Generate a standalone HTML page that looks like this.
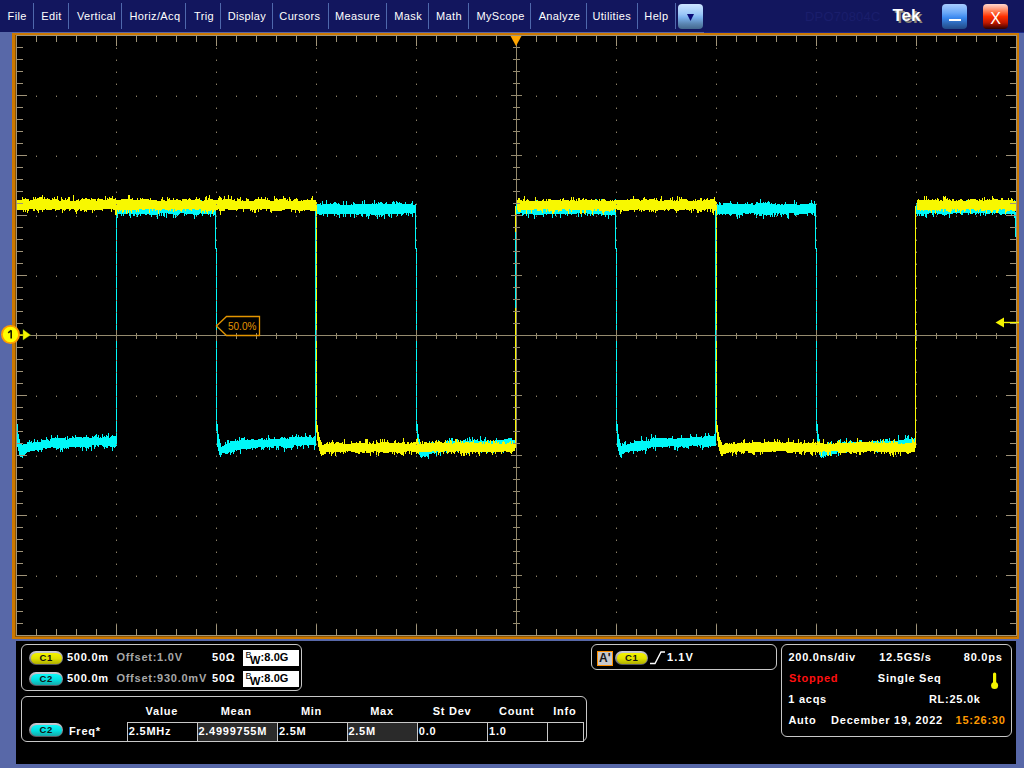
<!DOCTYPE html>
<html><head><meta charset="utf-8"><title>Scope</title>
<style>
html,body{margin:0;padding:0;width:1024px;height:768px;overflow:hidden;background:#5868a8;font-family:"Liberation Sans",sans-serif}
</style></head><body>
<div style="position:absolute;left:0;top:0;width:1024px;height:32px;background:#12165e"></div><div style="position:absolute;left:704px;top:32px;width:320px;height:1px;background:#1c2a8a"></div><div style="position:absolute;left:33px;top:3px;width:1px;height:26px;background:#4f68ac"></div><div style="position:absolute;left:68px;top:3px;width:1px;height:26px;background:#4f68ac"></div><div style="position:absolute;left:121px;top:3px;width:1px;height:26px;background:#4f68ac"></div><div style="position:absolute;left:185px;top:3px;width:1px;height:26px;background:#4f68ac"></div><div style="position:absolute;left:220px;top:3px;width:1px;height:26px;background:#4f68ac"></div><div style="position:absolute;left:272px;top:3px;width:1px;height:26px;background:#4f68ac"></div><div style="position:absolute;left:328px;top:3px;width:1px;height:26px;background:#4f68ac"></div><div style="position:absolute;left:386px;top:3px;width:1px;height:26px;background:#4f68ac"></div><div style="position:absolute;left:428px;top:3px;width:1px;height:26px;background:#4f68ac"></div><div style="position:absolute;left:468px;top:3px;width:1px;height:26px;background:#4f68ac"></div><div style="position:absolute;left:530px;top:3px;width:1px;height:26px;background:#4f68ac"></div><div style="position:absolute;left:586px;top:3px;width:1px;height:26px;background:#4f68ac"></div><div style="position:absolute;left:637px;top:3px;width:1px;height:26px;background:#4f68ac"></div><div style="position:absolute;left:675px;top:3px;width:1px;height:26px;background:#4f68ac"></div><svg width="1024" height="32" style="position:absolute;left:0;top:0"><text x="7.57" y="20" font-size="11" letter-spacing="0.35" fill="#ffffff" font-family="Liberation Sans">File</text><text x="41.36" y="20" font-size="11" letter-spacing="0.35" fill="#ffffff" font-family="Liberation Sans">Edit</text><text x="76.95" y="20" font-size="11" letter-spacing="0.35" fill="#ffffff" font-family="Liberation Sans">Vertical</text><text x="129.54000000000002" y="20" font-size="11" letter-spacing="0.35" fill="#ffffff" font-family="Liberation Sans">Horiz/Acq</text><text x="194.06" y="20" font-size="11" letter-spacing="0.35" fill="#ffffff" font-family="Liberation Sans">Trig</text><text x="227.68" y="20" font-size="11" letter-spacing="0.35" fill="#ffffff" font-family="Liberation Sans">Display</text><text x="279.36" y="20" font-size="11" letter-spacing="0.35" fill="#ffffff" font-family="Liberation Sans">Cursors</text><text x="334.96000000000004" y="20" font-size="11" letter-spacing="0.35" fill="#ffffff" font-family="Liberation Sans">Measure</text><text x="394.36" y="20" font-size="11" letter-spacing="0.35" fill="#ffffff" font-family="Liberation Sans">Mask</text><text x="436.06" y="20" font-size="11" letter-spacing="0.35" fill="#ffffff" font-family="Liberation Sans">Math</text><text x="476.45" y="20" font-size="11" letter-spacing="0.35" fill="#ffffff" font-family="Liberation Sans">MyScope</text><text x="538.6999999999999" y="20" font-size="11" letter-spacing="0.35" fill="#ffffff" font-family="Liberation Sans">Analyze</text><text x="592.4" y="20" font-size="11" letter-spacing="0.35" fill="#ffffff" font-family="Liberation Sans">Utilities</text><text x="644.3599999999999" y="20" font-size="11" letter-spacing="0.35" fill="#ffffff" font-family="Liberation Sans">Help</text><text x="805" y="21" font-size="13" letter-spacing="0.2" fill="#1a1e6c" font-family="Liberation Sans">DPO70804C</text><text x="894.5" y="22.5" font-size="17" font-weight="bold" fill="#8c8878" font-family="Liberation Sans">Tek</text><text x="892.5" y="21" font-size="17" font-weight="bold" fill="#ffffff" font-family="Liberation Sans">Tek</text></svg><div style="position:absolute;left:678px;top:4px;width:25px;height:25px;border-radius:4px;background:linear-gradient(#cce4ff 0%,#9cc8f8 40%,#7ab0ec 55%,#5a84b0 80%,#44688e 100%)"></div><svg width="1024" height="32" style="position:absolute;left:0;top:0"><path d="M687 14H694L690.5 21Z" fill="#0a0a78"/></svg><div style="position:absolute;left:942px;top:4px;width:25px;height:25px;border-radius:4px;background:linear-gradient(#a8ccff 0%,#6aa8f8 35%,#3a88f0 55%,#2c64b0 80%,#224a88 100%)"></div><div style="position:absolute;left:949px;top:19px;width:12px;height:2px;background:#ffffff"></div><div style="position:absolute;left:983px;top:4px;width:25px;height:25px;border-radius:4px;background:linear-gradient(#ffd8d0 0%,#ff7a50 30%,#ff3000 50%,#c01800 75%,#300000 100%)"></div><svg width="1024" height="32" style="position:absolute;left:0;top:0"><text x="995.5" y="23.5" font-size="16" text-anchor="middle" fill="#ffffff" font-family="Liberation Sans">X</text></svg>
<div style="position:absolute;left:12px;top:33px;width:1007px;height:606px;background:#cc7800"></div><div style="position:absolute;left:15px;top:35px;width:1002px;height:602px;background:#8c5400"></div><div style="position:absolute;left:16px;top:35px;width:1001px;height:601px;background:#000"></div>
<svg width="1024" height="768" style="position:absolute;left:0;top:0"><g shape-rendering="crispEdges"><rect x="516" y="35" width="1" height="601" fill="#948a6e"/><path d="M36 95h1v1h-1zM36 155h1v1h-1zM36 215h1v1h-1zM36 275h1v1h-1zM36 395h1v1h-1zM36 455h1v1h-1zM36 515h1v1h-1zM36 575h1v1h-1zM56 95h1v1h-1zM56 155h1v1h-1zM56 215h1v1h-1zM56 275h1v1h-1zM56 395h1v1h-1zM56 455h1v1h-1zM56 515h1v1h-1zM56 575h1v1h-1zM76 95h1v1h-1zM76 155h1v1h-1zM76 215h1v1h-1zM76 275h1v1h-1zM76 395h1v1h-1zM76 455h1v1h-1zM76 515h1v1h-1zM76 575h1v1h-1zM96 95h1v1h-1zM96 155h1v1h-1zM96 215h1v1h-1zM96 275h1v1h-1zM96 395h1v1h-1zM96 455h1v1h-1zM96 515h1v1h-1zM96 575h1v1h-1zM116 47h1v1h-1zM116 59h1v1h-1zM116 71h1v1h-1zM116 83h1v1h-1zM116 95h1v1h-1zM116 107h1v1h-1zM116 119h1v1h-1zM116 131h1v1h-1zM116 143h1v1h-1zM116 155h1v1h-1zM116 167h1v1h-1zM116 179h1v1h-1zM116 191h1v1h-1zM116 203h1v1h-1zM116 215h1v1h-1zM116 227h1v1h-1zM116 239h1v1h-1zM116 251h1v1h-1zM116 263h1v1h-1zM116 275h1v1h-1zM116 287h1v1h-1zM116 299h1v1h-1zM116 311h1v1h-1zM116 323h1v1h-1zM116 347h1v1h-1zM116 359h1v1h-1zM116 371h1v1h-1zM116 383h1v1h-1zM116 395h1v1h-1zM116 407h1v1h-1zM116 419h1v1h-1zM116 431h1v1h-1zM116 443h1v1h-1zM116 455h1v1h-1zM116 467h1v1h-1zM116 479h1v1h-1zM116 491h1v1h-1zM116 503h1v1h-1zM116 515h1v1h-1zM116 527h1v1h-1zM116 539h1v1h-1zM116 551h1v1h-1zM116 563h1v1h-1zM116 575h1v1h-1zM116 587h1v1h-1zM116 599h1v1h-1zM116 611h1v1h-1zM116 623h1v1h-1zM136 95h1v1h-1zM136 155h1v1h-1zM136 215h1v1h-1zM136 275h1v1h-1zM136 395h1v1h-1zM136 455h1v1h-1zM136 515h1v1h-1zM136 575h1v1h-1zM156 95h1v1h-1zM156 155h1v1h-1zM156 215h1v1h-1zM156 275h1v1h-1zM156 395h1v1h-1zM156 455h1v1h-1zM156 515h1v1h-1zM156 575h1v1h-1zM176 95h1v1h-1zM176 155h1v1h-1zM176 215h1v1h-1zM176 275h1v1h-1zM176 395h1v1h-1zM176 455h1v1h-1zM176 515h1v1h-1zM176 575h1v1h-1zM196 95h1v1h-1zM196 155h1v1h-1zM196 215h1v1h-1zM196 275h1v1h-1zM196 395h1v1h-1zM196 455h1v1h-1zM196 515h1v1h-1zM196 575h1v1h-1zM216 47h1v1h-1zM216 59h1v1h-1zM216 71h1v1h-1zM216 83h1v1h-1zM216 95h1v1h-1zM216 107h1v1h-1zM216 119h1v1h-1zM216 131h1v1h-1zM216 143h1v1h-1zM216 155h1v1h-1zM216 167h1v1h-1zM216 179h1v1h-1zM216 191h1v1h-1zM216 203h1v1h-1zM216 215h1v1h-1zM216 227h1v1h-1zM216 239h1v1h-1zM216 251h1v1h-1zM216 263h1v1h-1zM216 275h1v1h-1zM216 287h1v1h-1zM216 299h1v1h-1zM216 311h1v1h-1zM216 323h1v1h-1zM216 347h1v1h-1zM216 359h1v1h-1zM216 371h1v1h-1zM216 383h1v1h-1zM216 395h1v1h-1zM216 407h1v1h-1zM216 419h1v1h-1zM216 431h1v1h-1zM216 443h1v1h-1zM216 455h1v1h-1zM216 467h1v1h-1zM216 479h1v1h-1zM216 491h1v1h-1zM216 503h1v1h-1zM216 515h1v1h-1zM216 527h1v1h-1zM216 539h1v1h-1zM216 551h1v1h-1zM216 563h1v1h-1zM216 575h1v1h-1zM216 587h1v1h-1zM216 599h1v1h-1zM216 611h1v1h-1zM216 623h1v1h-1zM236 95h1v1h-1zM236 155h1v1h-1zM236 215h1v1h-1zM236 275h1v1h-1zM236 395h1v1h-1zM236 455h1v1h-1zM236 515h1v1h-1zM236 575h1v1h-1zM256 95h1v1h-1zM256 155h1v1h-1zM256 215h1v1h-1zM256 275h1v1h-1zM256 395h1v1h-1zM256 455h1v1h-1zM256 515h1v1h-1zM256 575h1v1h-1zM276 95h1v1h-1zM276 155h1v1h-1zM276 215h1v1h-1zM276 275h1v1h-1zM276 395h1v1h-1zM276 455h1v1h-1zM276 515h1v1h-1zM276 575h1v1h-1zM296 95h1v1h-1zM296 155h1v1h-1zM296 215h1v1h-1zM296 275h1v1h-1zM296 395h1v1h-1zM296 455h1v1h-1zM296 515h1v1h-1zM296 575h1v1h-1zM316 47h1v1h-1zM316 59h1v1h-1zM316 71h1v1h-1zM316 83h1v1h-1zM316 95h1v1h-1zM316 107h1v1h-1zM316 119h1v1h-1zM316 131h1v1h-1zM316 143h1v1h-1zM316 155h1v1h-1zM316 167h1v1h-1zM316 179h1v1h-1zM316 191h1v1h-1zM316 203h1v1h-1zM316 215h1v1h-1zM316 227h1v1h-1zM316 239h1v1h-1zM316 251h1v1h-1zM316 263h1v1h-1zM316 275h1v1h-1zM316 287h1v1h-1zM316 299h1v1h-1zM316 311h1v1h-1zM316 323h1v1h-1zM316 347h1v1h-1zM316 359h1v1h-1zM316 371h1v1h-1zM316 383h1v1h-1zM316 395h1v1h-1zM316 407h1v1h-1zM316 419h1v1h-1zM316 431h1v1h-1zM316 443h1v1h-1zM316 455h1v1h-1zM316 467h1v1h-1zM316 479h1v1h-1zM316 491h1v1h-1zM316 503h1v1h-1zM316 515h1v1h-1zM316 527h1v1h-1zM316 539h1v1h-1zM316 551h1v1h-1zM316 563h1v1h-1zM316 575h1v1h-1zM316 587h1v1h-1zM316 599h1v1h-1zM316 611h1v1h-1zM316 623h1v1h-1zM336 95h1v1h-1zM336 155h1v1h-1zM336 215h1v1h-1zM336 275h1v1h-1zM336 395h1v1h-1zM336 455h1v1h-1zM336 515h1v1h-1zM336 575h1v1h-1zM356 95h1v1h-1zM356 155h1v1h-1zM356 215h1v1h-1zM356 275h1v1h-1zM356 395h1v1h-1zM356 455h1v1h-1zM356 515h1v1h-1zM356 575h1v1h-1zM376 95h1v1h-1zM376 155h1v1h-1zM376 215h1v1h-1zM376 275h1v1h-1zM376 395h1v1h-1zM376 455h1v1h-1zM376 515h1v1h-1zM376 575h1v1h-1zM396 95h1v1h-1zM396 155h1v1h-1zM396 215h1v1h-1zM396 275h1v1h-1zM396 395h1v1h-1zM396 455h1v1h-1zM396 515h1v1h-1zM396 575h1v1h-1zM416 47h1v1h-1zM416 59h1v1h-1zM416 71h1v1h-1zM416 83h1v1h-1zM416 95h1v1h-1zM416 107h1v1h-1zM416 119h1v1h-1zM416 131h1v1h-1zM416 143h1v1h-1zM416 155h1v1h-1zM416 167h1v1h-1zM416 179h1v1h-1zM416 191h1v1h-1zM416 203h1v1h-1zM416 215h1v1h-1zM416 227h1v1h-1zM416 239h1v1h-1zM416 251h1v1h-1zM416 263h1v1h-1zM416 275h1v1h-1zM416 287h1v1h-1zM416 299h1v1h-1zM416 311h1v1h-1zM416 323h1v1h-1zM416 347h1v1h-1zM416 359h1v1h-1zM416 371h1v1h-1zM416 383h1v1h-1zM416 395h1v1h-1zM416 407h1v1h-1zM416 419h1v1h-1zM416 431h1v1h-1zM416 443h1v1h-1zM416 455h1v1h-1zM416 467h1v1h-1zM416 479h1v1h-1zM416 491h1v1h-1zM416 503h1v1h-1zM416 515h1v1h-1zM416 527h1v1h-1zM416 539h1v1h-1zM416 551h1v1h-1zM416 563h1v1h-1zM416 575h1v1h-1zM416 587h1v1h-1zM416 599h1v1h-1zM416 611h1v1h-1zM416 623h1v1h-1zM436 95h1v1h-1zM436 155h1v1h-1zM436 215h1v1h-1zM436 275h1v1h-1zM436 395h1v1h-1zM436 455h1v1h-1zM436 515h1v1h-1zM436 575h1v1h-1zM456 95h1v1h-1zM456 155h1v1h-1zM456 215h1v1h-1zM456 275h1v1h-1zM456 395h1v1h-1zM456 455h1v1h-1zM456 515h1v1h-1zM456 575h1v1h-1zM476 95h1v1h-1zM476 155h1v1h-1zM476 215h1v1h-1zM476 275h1v1h-1zM476 395h1v1h-1zM476 455h1v1h-1zM476 515h1v1h-1zM476 575h1v1h-1zM496 95h1v1h-1zM496 155h1v1h-1zM496 215h1v1h-1zM496 275h1v1h-1zM496 395h1v1h-1zM496 455h1v1h-1zM496 515h1v1h-1zM496 575h1v1h-1zM536 95h1v1h-1zM536 155h1v1h-1zM536 215h1v1h-1zM536 275h1v1h-1zM536 395h1v1h-1zM536 455h1v1h-1zM536 515h1v1h-1zM536 575h1v1h-1zM556 95h1v1h-1zM556 155h1v1h-1zM556 215h1v1h-1zM556 275h1v1h-1zM556 395h1v1h-1zM556 455h1v1h-1zM556 515h1v1h-1zM556 575h1v1h-1zM576 95h1v1h-1zM576 155h1v1h-1zM576 215h1v1h-1zM576 275h1v1h-1zM576 395h1v1h-1zM576 455h1v1h-1zM576 515h1v1h-1zM576 575h1v1h-1zM596 95h1v1h-1zM596 155h1v1h-1zM596 215h1v1h-1zM596 275h1v1h-1zM596 395h1v1h-1zM596 455h1v1h-1zM596 515h1v1h-1zM596 575h1v1h-1zM616 47h1v1h-1zM616 59h1v1h-1zM616 71h1v1h-1zM616 83h1v1h-1zM616 95h1v1h-1zM616 107h1v1h-1zM616 119h1v1h-1zM616 131h1v1h-1zM616 143h1v1h-1zM616 155h1v1h-1zM616 167h1v1h-1zM616 179h1v1h-1zM616 191h1v1h-1zM616 203h1v1h-1zM616 215h1v1h-1zM616 227h1v1h-1zM616 239h1v1h-1zM616 251h1v1h-1zM616 263h1v1h-1zM616 275h1v1h-1zM616 287h1v1h-1zM616 299h1v1h-1zM616 311h1v1h-1zM616 323h1v1h-1zM616 347h1v1h-1zM616 359h1v1h-1zM616 371h1v1h-1zM616 383h1v1h-1zM616 395h1v1h-1zM616 407h1v1h-1zM616 419h1v1h-1zM616 431h1v1h-1zM616 443h1v1h-1zM616 455h1v1h-1zM616 467h1v1h-1zM616 479h1v1h-1zM616 491h1v1h-1zM616 503h1v1h-1zM616 515h1v1h-1zM616 527h1v1h-1zM616 539h1v1h-1zM616 551h1v1h-1zM616 563h1v1h-1zM616 575h1v1h-1zM616 587h1v1h-1zM616 599h1v1h-1zM616 611h1v1h-1zM616 623h1v1h-1zM636 95h1v1h-1zM636 155h1v1h-1zM636 215h1v1h-1zM636 275h1v1h-1zM636 395h1v1h-1zM636 455h1v1h-1zM636 515h1v1h-1zM636 575h1v1h-1zM656 95h1v1h-1zM656 155h1v1h-1zM656 215h1v1h-1zM656 275h1v1h-1zM656 395h1v1h-1zM656 455h1v1h-1zM656 515h1v1h-1zM656 575h1v1h-1zM676 95h1v1h-1zM676 155h1v1h-1zM676 215h1v1h-1zM676 275h1v1h-1zM676 395h1v1h-1zM676 455h1v1h-1zM676 515h1v1h-1zM676 575h1v1h-1zM696 95h1v1h-1zM696 155h1v1h-1zM696 215h1v1h-1zM696 275h1v1h-1zM696 395h1v1h-1zM696 455h1v1h-1zM696 515h1v1h-1zM696 575h1v1h-1zM716 47h1v1h-1zM716 59h1v1h-1zM716 71h1v1h-1zM716 83h1v1h-1zM716 95h1v1h-1zM716 107h1v1h-1zM716 119h1v1h-1zM716 131h1v1h-1zM716 143h1v1h-1zM716 155h1v1h-1zM716 167h1v1h-1zM716 179h1v1h-1zM716 191h1v1h-1zM716 203h1v1h-1zM716 215h1v1h-1zM716 227h1v1h-1zM716 239h1v1h-1zM716 251h1v1h-1zM716 263h1v1h-1zM716 275h1v1h-1zM716 287h1v1h-1zM716 299h1v1h-1zM716 311h1v1h-1zM716 323h1v1h-1zM716 347h1v1h-1zM716 359h1v1h-1zM716 371h1v1h-1zM716 383h1v1h-1zM716 395h1v1h-1zM716 407h1v1h-1zM716 419h1v1h-1zM716 431h1v1h-1zM716 443h1v1h-1zM716 455h1v1h-1zM716 467h1v1h-1zM716 479h1v1h-1zM716 491h1v1h-1zM716 503h1v1h-1zM716 515h1v1h-1zM716 527h1v1h-1zM716 539h1v1h-1zM716 551h1v1h-1zM716 563h1v1h-1zM716 575h1v1h-1zM716 587h1v1h-1zM716 599h1v1h-1zM716 611h1v1h-1zM716 623h1v1h-1zM736 95h1v1h-1zM736 155h1v1h-1zM736 215h1v1h-1zM736 275h1v1h-1zM736 395h1v1h-1zM736 455h1v1h-1zM736 515h1v1h-1zM736 575h1v1h-1zM756 95h1v1h-1zM756 155h1v1h-1zM756 215h1v1h-1zM756 275h1v1h-1zM756 395h1v1h-1zM756 455h1v1h-1zM756 515h1v1h-1zM756 575h1v1h-1zM776 95h1v1h-1zM776 155h1v1h-1zM776 215h1v1h-1zM776 275h1v1h-1zM776 395h1v1h-1zM776 455h1v1h-1zM776 515h1v1h-1zM776 575h1v1h-1zM796 95h1v1h-1zM796 155h1v1h-1zM796 215h1v1h-1zM796 275h1v1h-1zM796 395h1v1h-1zM796 455h1v1h-1zM796 515h1v1h-1zM796 575h1v1h-1zM816 47h1v1h-1zM816 59h1v1h-1zM816 71h1v1h-1zM816 83h1v1h-1zM816 95h1v1h-1zM816 107h1v1h-1zM816 119h1v1h-1zM816 131h1v1h-1zM816 143h1v1h-1zM816 155h1v1h-1zM816 167h1v1h-1zM816 179h1v1h-1zM816 191h1v1h-1zM816 203h1v1h-1zM816 215h1v1h-1zM816 227h1v1h-1zM816 239h1v1h-1zM816 251h1v1h-1zM816 263h1v1h-1zM816 275h1v1h-1zM816 287h1v1h-1zM816 299h1v1h-1zM816 311h1v1h-1zM816 323h1v1h-1zM816 347h1v1h-1zM816 359h1v1h-1zM816 371h1v1h-1zM816 383h1v1h-1zM816 395h1v1h-1zM816 407h1v1h-1zM816 419h1v1h-1zM816 431h1v1h-1zM816 443h1v1h-1zM816 455h1v1h-1zM816 467h1v1h-1zM816 479h1v1h-1zM816 491h1v1h-1zM816 503h1v1h-1zM816 515h1v1h-1zM816 527h1v1h-1zM816 539h1v1h-1zM816 551h1v1h-1zM816 563h1v1h-1zM816 575h1v1h-1zM816 587h1v1h-1zM816 599h1v1h-1zM816 611h1v1h-1zM816 623h1v1h-1zM836 95h1v1h-1zM836 155h1v1h-1zM836 215h1v1h-1zM836 275h1v1h-1zM836 395h1v1h-1zM836 455h1v1h-1zM836 515h1v1h-1zM836 575h1v1h-1zM856 95h1v1h-1zM856 155h1v1h-1zM856 215h1v1h-1zM856 275h1v1h-1zM856 395h1v1h-1zM856 455h1v1h-1zM856 515h1v1h-1zM856 575h1v1h-1zM876 95h1v1h-1zM876 155h1v1h-1zM876 215h1v1h-1zM876 275h1v1h-1zM876 395h1v1h-1zM876 455h1v1h-1zM876 515h1v1h-1zM876 575h1v1h-1zM896 95h1v1h-1zM896 155h1v1h-1zM896 215h1v1h-1zM896 275h1v1h-1zM896 395h1v1h-1zM896 455h1v1h-1zM896 515h1v1h-1zM896 575h1v1h-1zM916 47h1v1h-1zM916 59h1v1h-1zM916 71h1v1h-1zM916 83h1v1h-1zM916 95h1v1h-1zM916 107h1v1h-1zM916 119h1v1h-1zM916 131h1v1h-1zM916 143h1v1h-1zM916 155h1v1h-1zM916 167h1v1h-1zM916 179h1v1h-1zM916 191h1v1h-1zM916 203h1v1h-1zM916 215h1v1h-1zM916 227h1v1h-1zM916 239h1v1h-1zM916 251h1v1h-1zM916 263h1v1h-1zM916 275h1v1h-1zM916 287h1v1h-1zM916 299h1v1h-1zM916 311h1v1h-1zM916 323h1v1h-1zM916 347h1v1h-1zM916 359h1v1h-1zM916 371h1v1h-1zM916 383h1v1h-1zM916 395h1v1h-1zM916 407h1v1h-1zM916 419h1v1h-1zM916 431h1v1h-1zM916 443h1v1h-1zM916 455h1v1h-1zM916 467h1v1h-1zM916 479h1v1h-1zM916 491h1v1h-1zM916 503h1v1h-1zM916 515h1v1h-1zM916 527h1v1h-1zM916 539h1v1h-1zM916 551h1v1h-1zM916 563h1v1h-1zM916 575h1v1h-1zM916 587h1v1h-1zM916 599h1v1h-1zM916 611h1v1h-1zM916 623h1v1h-1zM936 95h1v1h-1zM936 155h1v1h-1zM936 215h1v1h-1zM936 275h1v1h-1zM936 395h1v1h-1zM936 455h1v1h-1zM936 515h1v1h-1zM936 575h1v1h-1zM956 95h1v1h-1zM956 155h1v1h-1zM956 215h1v1h-1zM956 275h1v1h-1zM956 395h1v1h-1zM956 455h1v1h-1zM956 515h1v1h-1zM956 575h1v1h-1zM976 95h1v1h-1zM976 155h1v1h-1zM976 215h1v1h-1zM976 275h1v1h-1zM976 395h1v1h-1zM976 455h1v1h-1zM976 515h1v1h-1zM976 575h1v1h-1zM996 95h1v1h-1zM996 155h1v1h-1zM996 215h1v1h-1zM996 275h1v1h-1zM996 395h1v1h-1zM996 455h1v1h-1zM996 515h1v1h-1zM996 575h1v1h-1z" fill="#3c3628"/><path d="M17.5 424V447M18.5 434V451M19.5 439V455M20.5 443V457M21.5 443V457M22.5 445V458M23.5 444V455M24.5 444V456M25.5 444V454M26.5 444V453M27.5 442V452M28.5 442V452M29.5 440V452M30.5 442V451M31.5 441V451M32.5 443V451M33.5 442V451M34.5 439V451M35.5 442V450M36.5 442V450M37.5 440V451M38.5 442V452M39.5 442V450M40.5 442V450M41.5 439V452M42.5 440V450M43.5 440V448M44.5 440V448M45.5 440V449M46.5 437V449M47.5 439V448M48.5 440V448M49.5 441V448M50.5 439V448M51.5 435V447M52.5 438V447M53.5 438V448M54.5 438V448M55.5 437V448M56.5 438V450M57.5 435V449M58.5 438V449M59.5 438V448M60.5 438V452M61.5 438V450M62.5 438V452M63.5 438V448M64.5 438V449M65.5 437V448M66.5 440V449M67.5 436V448M68.5 439V449M69.5 438V447M70.5 438V447M71.5 438V447M72.5 436V447M73.5 437V447M74.5 438V447M75.5 435V448M76.5 437V447M77.5 437V447M78.5 437V447M79.5 437V447M80.5 437V448M81.5 437V447M82.5 438V451M83.5 437V447M84.5 437V447M85.5 437V448M86.5 435V451M87.5 437V448M88.5 437V449M89.5 438V447M90.5 438V447M91.5 438V451M92.5 436V445M93.5 437V445M94.5 436V449M95.5 435V447M96.5 434V445M97.5 437V446M98.5 435V447M99.5 438V445M100.5 437V445M101.5 438V445M102.5 434V446M103.5 437V447M104.5 436V449M105.5 437V447M106.5 435V448M107.5 436V448M108.5 433V446M109.5 438V446M110.5 437V447M111.5 436V447M112.5 435V451M113.5 436V447M114.5 436V448M115.5 436V447M217.5 424V447M218.5 434V451M219.5 439V455M220.5 443V457M221.5 447V455M222.5 446V453M223.5 446V453M224.5 445V453M225.5 442V454M226.5 444V454M227.5 440V454M228.5 440V453M229.5 443V452M230.5 441V455M231.5 441V453M232.5 441V452M233.5 441V454M234.5 441V452M235.5 439V450M236.5 441V451M237.5 440V450M238.5 441V450M239.5 437V450M240.5 440V454M241.5 438V449M242.5 438V449M243.5 438V449M244.5 437V449M245.5 440V449M246.5 440V450M247.5 439V449M248.5 440V449M249.5 440V449M250.5 440V449M251.5 439V448M252.5 439V450M253.5 439V448M254.5 440V448M255.5 440V449M256.5 440V448M257.5 440V448M258.5 439V447M259.5 439V447M260.5 439V447M261.5 438V450M262.5 438V449M263.5 440V450M264.5 439V448M265.5 440V447M266.5 438V447M267.5 440V448M268.5 435V447M269.5 438V450M270.5 439V447M271.5 439V448M272.5 439V448M273.5 439V448M274.5 437V446M275.5 439V446M276.5 439V450M277.5 439V448M278.5 439V450M279.5 439V446M280.5 438V446M281.5 437V447M282.5 437V447M283.5 438V448M284.5 437V452M285.5 438V448M286.5 439V449M287.5 438V448M288.5 439V448M289.5 437V448M290.5 437V448M291.5 437V450M292.5 435V448M293.5 437V447M294.5 437V445M295.5 436V445M296.5 434V446M297.5 437V449M298.5 435V446M299.5 437V446M300.5 437V447M301.5 436V446M302.5 437V445M303.5 437V449M304.5 437V445M305.5 433V445M306.5 436V445M307.5 437V446M308.5 437V448M309.5 435V445M310.5 435V445M311.5 437V445M312.5 438V445M313.5 437V445M314.5 436V450M215.5 206V249M216.5 248V431M417.5 424V447M418.5 434V451M419.5 439V455M420.5 443V457M421.5 449V458M422.5 447V457M423.5 446V456M424.5 446V457M425.5 446V457M426.5 445V456M427.5 445V457M428.5 444V459M429.5 441V454M430.5 443V454M431.5 442V454M432.5 443V453M433.5 442V453M434.5 443V454M435.5 444V453M436.5 442V456M437.5 443V452M438.5 440V452M439.5 441V452M440.5 443V456M441.5 443V452M442.5 443V452M443.5 443V452M444.5 442V452M445.5 441V451M446.5 441V453M447.5 440V451M448.5 441V451M449.5 438V450M450.5 441V450M451.5 438V451M452.5 438V450M453.5 441V451M454.5 441V451M455.5 441V451M456.5 441V451M457.5 439V452M458.5 443V451M459.5 442V449M460.5 440V449M461.5 441V449M462.5 441V451M463.5 440V451M464.5 440V450M465.5 439V449M466.5 441V449M467.5 438V450M468.5 441V454M469.5 437V452M470.5 439V452M471.5 441V450M472.5 437V450M473.5 440V451M474.5 439V451M475.5 440V450M476.5 440V451M477.5 439V451M478.5 441V449M479.5 441V450M480.5 436V450M481.5 440V453M482.5 441V448M483.5 441V450M484.5 439V449M485.5 437V449M486.5 441V449M487.5 440V453M488.5 440V448M489.5 441V452M490.5 441V452M491.5 441V450M492.5 441V449M493.5 441V453M494.5 441V449M495.5 440V449M496.5 438V450M497.5 440V452M498.5 440V450M499.5 440V452M500.5 440V452M501.5 440V450M502.5 440V450M503.5 440V453M504.5 439V449M505.5 439V448M506.5 439V448M507.5 439V448M508.5 438V448M509.5 438V448M510.5 438V448M511.5 438V449M512.5 440V449M513.5 440V449M514.5 440V449M415.5 206V249M416.5 248V431M617.5 424V447M618.5 434V451M619.5 439V455M620.5 443V457M621.5 446V458M622.5 443V454M623.5 444V454M624.5 442V453M625.5 441V452M626.5 445V452M627.5 444V452M628.5 444V453M629.5 444V452M630.5 442V451M631.5 443V451M632.5 443V451M633.5 443V454M634.5 440V451M635.5 441V451M636.5 441V451M637.5 441V452M638.5 441V451M639.5 441V451M640.5 441V451M641.5 436V450M642.5 440V451M643.5 441V450M644.5 441V450M645.5 441V454M646.5 437V451M647.5 441V448M648.5 439V449M649.5 441V448M650.5 439V448M651.5 434V447M652.5 438V447M653.5 437V449M654.5 438V447M655.5 435V451M656.5 438V447M657.5 438V447M658.5 438V447M659.5 438V447M660.5 438V447M661.5 438V447M662.5 438V448M663.5 438V447M664.5 438V447M665.5 438V447M666.5 438V447M667.5 439V447M668.5 438V446M669.5 438V448M670.5 438V446M671.5 438V446M672.5 436V446M673.5 439V446M674.5 439V450M675.5 439V450M676.5 439V447M677.5 438V451M678.5 438V448M679.5 438V447M680.5 438V447M681.5 435V446M682.5 438V447M683.5 438V448M684.5 438V448M685.5 438V447M686.5 438V448M687.5 438V448M688.5 438V449M689.5 438V446M690.5 434V446M691.5 436V446M692.5 437V445M693.5 437V446M694.5 437V446M695.5 437V446M696.5 434V446M697.5 437V447M698.5 437V445M699.5 437V446M700.5 437V448M701.5 436V445M702.5 438V450M703.5 437V448M704.5 436V447M705.5 433V447M706.5 436V447M707.5 436V447M708.5 433V448M709.5 435V446M710.5 436V447M711.5 436V446M712.5 436V446M713.5 436V446M714.5 434V446M615.5 206V249M616.5 248V431M817.5 424V447M818.5 434V451M819.5 439V455M820.5 443V457M821.5 448V458M822.5 448V457M823.5 447V458M824.5 447V456M825.5 447V457M826.5 446V455M827.5 445V456M828.5 442V455M829.5 443V455M830.5 444V455M831.5 441V456M832.5 444V454M833.5 445V454M834.5 445V454M835.5 444V454M836.5 444V454M837.5 441V452M838.5 440V456M839.5 443V452M840.5 439V451M841.5 443V451M842.5 442V451M843.5 442V451M844.5 441V451M845.5 442V450M846.5 438V453M847.5 443V450M848.5 442V450M849.5 441V453M850.5 440V451M851.5 441V450M852.5 442V450M853.5 442V450M854.5 442V450M855.5 442V451M856.5 442V450M857.5 442V450M858.5 442V451M859.5 440V449M860.5 440V449M861.5 440V449M862.5 442V449M863.5 442V449M864.5 442V451M865.5 442V449M866.5 442V451M867.5 442V449M868.5 442V449M869.5 442V449M870.5 442V449M871.5 441V449M872.5 441V449M873.5 441V449M874.5 441V452M875.5 441V450M876.5 441V452M877.5 441V453M878.5 441V450M879.5 442V449M880.5 439V448M881.5 441V448M882.5 440V448M883.5 440V449M884.5 441V448M885.5 439V449M886.5 439V449M887.5 439V449M888.5 441V449M889.5 438V448M890.5 441V448M891.5 441V448M892.5 441V448M893.5 440V449M894.5 441V449M895.5 441V449M896.5 441V449M897.5 441V449M898.5 435V450M899.5 440V449M900.5 440V449M901.5 440V452M902.5 440V450M903.5 440V450M904.5 439V449M905.5 435V447M906.5 438V447M907.5 436V447M908.5 435V447M909.5 439V447M910.5 439V447M911.5 437V447M912.5 439V447M913.5 439V449M914.5 438V449M815.5 206V249M816.5 248V431M116.5 210V446M117.5 204V218M118.5 204V214M119.5 203V214M120.5 201V214M121.5 203V216M122.5 200V214M123.5 201V216M124.5 204V214M125.5 204V214M126.5 200V214M127.5 204V214M128.5 202V213M129.5 204V216M130.5 205V218M131.5 204V214M132.5 204V214M133.5 202V216M134.5 203V216M135.5 203V214M136.5 203V215M137.5 204V217M138.5 204V215M139.5 204V214M140.5 200V216M141.5 204V214M142.5 200V214M143.5 202V214M144.5 204V214M145.5 203V215M146.5 201V215M147.5 201V214M148.5 203V214M149.5 203V215M150.5 204V215M151.5 204V217M152.5 204V215M153.5 204V215M154.5 205V215M155.5 204V215M156.5 204V215M157.5 203V219M158.5 204V214M159.5 204V216M160.5 202V213M161.5 202V216M162.5 204V213M163.5 204V216M164.5 204V217M165.5 204V213M166.5 204V218M167.5 201V213M168.5 204V214M169.5 204V214M170.5 204V214M171.5 204V214M172.5 204V214M173.5 204V218M174.5 201V215M175.5 202V218M176.5 204V215M177.5 204V216M178.5 204V215M179.5 205V214M180.5 205V213M181.5 203V213M182.5 205V213M183.5 204V213M184.5 205V216M185.5 204V214M186.5 203V215M187.5 203V214M188.5 204V214M189.5 204V214M190.5 204V214M191.5 204V214M192.5 204V214M193.5 204V215M194.5 204V219M195.5 204V215M196.5 204V216M197.5 204V215M198.5 204V215M199.5 204V214M200.5 202V213M201.5 200V214M202.5 204V216M203.5 204V214M204.5 202V214M205.5 202V214M206.5 204V214M207.5 202V214M208.5 203V215M209.5 204V214M210.5 204V217M211.5 204V214M212.5 204V214M213.5 204V216M214.5 201V215M215.5 202V214M315.5 210V446M316.5 204V214M317.5 204V214M318.5 204V214M319.5 204V215M320.5 203V215M321.5 205V215M322.5 201V214M323.5 204V216M324.5 204V214M325.5 204V214M326.5 200V214M327.5 204V217M328.5 204V214M329.5 204V214M330.5 203V214M331.5 204V214M332.5 204V214M333.5 203V214M334.5 202V216M335.5 202V214M336.5 203V214M337.5 204V215M338.5 203V215M339.5 204V218M340.5 205V214M341.5 205V214M342.5 205V214M343.5 201V217M344.5 205V214M345.5 205V217M346.5 201V214M347.5 205V214M348.5 205V214M349.5 205V214M350.5 205V217M351.5 204V214M352.5 205V214M353.5 202V214M354.5 203V218M355.5 204V214M356.5 204V215M357.5 204V215M358.5 204V215M359.5 204V214M360.5 204V214M361.5 204V216M362.5 201V217M363.5 204V214M364.5 200V214M365.5 204V214M366.5 204V217M367.5 204V216M368.5 204V219M369.5 204V216M370.5 204V214M371.5 204V215M372.5 203V215M373.5 204V215M374.5 200V215M375.5 204V216M376.5 203V215M377.5 204V219M378.5 202V215M379.5 203V217M380.5 202V215M381.5 202V217M382.5 203V216M383.5 204V215M384.5 204V219M385.5 203V214M386.5 202V214M387.5 204V214M388.5 204V216M389.5 204V217M390.5 204V214M391.5 204V218M392.5 202V214M393.5 201V214M394.5 202V214M395.5 204V214M396.5 201V214M397.5 202V216M398.5 203V214M399.5 202V214M400.5 203V214M401.5 203V216M402.5 204V215M403.5 204V214M404.5 204V213M405.5 202V213M406.5 204V215M407.5 204V213M408.5 204V216M409.5 204V213M410.5 204V214M411.5 203V214M412.5 201V217M413.5 205V213M414.5 205V213M415.5 204V214M515.5 210V446M516.5 204V214M517.5 204V214M518.5 201V214M519.5 204V214M520.5 201V213M521.5 204V213M522.5 204V216M523.5 204V215M524.5 203V214M525.5 204V214M526.5 200V216M527.5 204V214M528.5 204V218M529.5 204V214M530.5 204V214M531.5 204V214M532.5 202V214M533.5 204V215M534.5 204V219M535.5 204V215M536.5 200V215M537.5 204V215M538.5 204V215M539.5 204V215M540.5 204V215M541.5 201V215M542.5 203V215M543.5 202V217M544.5 203V214M545.5 203V214M546.5 202V215M547.5 201V214M548.5 203V214M549.5 201V214M550.5 204V214M551.5 204V214M552.5 204V218M553.5 205V214M554.5 203V214M555.5 204V216M556.5 204V214M557.5 204V214M558.5 204V214M559.5 204V214M560.5 203V218M561.5 204V214M562.5 204V214M563.5 205V214M564.5 205V214M565.5 205V215M566.5 204V214M567.5 204V216M568.5 204V214M569.5 201V214M570.5 204V214M571.5 205V215M572.5 205V214M573.5 205V214M574.5 205V214M575.5 205V214M576.5 203V214M577.5 205V213M578.5 205V217M579.5 201V213M580.5 203V213M581.5 203V217M582.5 203V213M583.5 203V213M584.5 203V213M585.5 203V215M586.5 203V213M587.5 205V216M588.5 205V214M589.5 202V214M590.5 200V216M591.5 204V214M592.5 203V214M593.5 204V216M594.5 204V214M595.5 203V214M596.5 199V214M597.5 203V214M598.5 203V215M599.5 203V214M600.5 203V214M601.5 199V216M602.5 203V215M603.5 203V215M604.5 204V215M605.5 201V217M606.5 201V215M607.5 203V215M608.5 202V219M609.5 202V215M610.5 203V215M611.5 203V216M612.5 200V215M613.5 203V215M614.5 203V215M615.5 199V215M715.5 210V446M716.5 204V215M717.5 204V215M718.5 205V214M719.5 202V215M720.5 203V214M721.5 205V214M722.5 205V215M723.5 203V214M724.5 203V214M725.5 203V215M726.5 203V214M727.5 203V214M728.5 203V214M729.5 203V215M730.5 201V216M731.5 203V215M732.5 204V214M733.5 204V214M734.5 204V214M735.5 204V214M736.5 204V216M737.5 202V219M738.5 204V215M739.5 204V218M740.5 204V215M741.5 204V215M742.5 204V216M743.5 204V213M744.5 204V213M745.5 203V214M746.5 204V214M747.5 202V214M748.5 204V214M749.5 204V213M750.5 204V214M751.5 203V213M752.5 203V213M753.5 205V213M754.5 205V215M755.5 204V214M756.5 202V218M757.5 202V215M758.5 203V214M759.5 203V216M760.5 199V216M761.5 203V216M762.5 203V214M763.5 202V219M764.5 203V215M765.5 202V215M766.5 203V216M767.5 202V215M768.5 201V215M769.5 202V215M770.5 204V217M771.5 203V215M772.5 204V217M773.5 204V213M774.5 204V217M775.5 203V215M776.5 205V213M777.5 204V216M778.5 204V214M779.5 204V213M780.5 205V215M781.5 204V217M782.5 204V214M783.5 205V215M784.5 204V214M785.5 202V214M786.5 204V215M787.5 204V218M788.5 204V219M789.5 204V213M790.5 204V213M791.5 204V213M792.5 204V213M793.5 204V213M794.5 200V215M795.5 204V216M796.5 202V215M797.5 205V215M798.5 205V215M799.5 205V214M800.5 204V214M801.5 204V214M802.5 204V214M803.5 204V214M804.5 204V214M805.5 204V214M806.5 204V214M807.5 204V216M808.5 204V213M809.5 203V213M810.5 203V213M811.5 200V214M812.5 203V215M813.5 204V213M814.5 201V216M815.5 204V214M915.5 210V446M916.5 203V214M917.5 203V216M918.5 205V214M919.5 205V216M920.5 205V214M921.5 205V216M922.5 205V216M923.5 204V216M924.5 205V214M925.5 205V217M926.5 205V218M927.5 204V214M928.5 205V214M929.5 205V213M930.5 204V213M931.5 204V213M932.5 202V215M933.5 204V217M934.5 202V213M935.5 200V214M936.5 204V213M937.5 204V215M938.5 204V214M939.5 205V214M940.5 204V214M941.5 205V214M942.5 205V215M943.5 205V215M944.5 205V216M945.5 203V215M946.5 205V215M947.5 205V214M948.5 201V214M949.5 205V218M950.5 205V214M951.5 205V214M952.5 203V214M953.5 204V213M954.5 204V213M955.5 204V213M956.5 202V214M957.5 201V213M958.5 203V213M959.5 203V213M960.5 203V213M961.5 203V215M962.5 203V215M963.5 203V213M964.5 203V213M965.5 201V213M966.5 200V213M967.5 204V213M968.5 204V215M969.5 204V213M970.5 204V214M971.5 203V214M972.5 204V214M973.5 204V213M974.5 202V213M975.5 204V215M976.5 203V214M977.5 204V213M978.5 203V214M979.5 204V213M980.5 204V216M981.5 204V213M982.5 203V213M983.5 203V215M984.5 204V213M985.5 202V216M986.5 204V214M987.5 204V214M988.5 204V214M989.5 204V214M990.5 200V213M991.5 204V213M992.5 204V215M993.5 204V213M994.5 204V214M995.5 203V213M996.5 203V213M997.5 203V213M998.5 201V213M999.5 203V214M1000.5 202V215M1001.5 200V215M1002.5 204V214M1003.5 200V214M1004.5 204V214M1005.5 203V215M1006.5 203V214M1007.5 204V214M1008.5 203V214M1009.5 204V214M1010.5 204V214M1011.5 204V216M1012.5 204V214M1013.5 204V214M1014.5 200V218M1015.5 212V237" stroke="#00f8f8" stroke-width="1" fill="none"/><path d="M17.5 200V210M18.5 200V210M19.5 200V210M20.5 200V210M21.5 200V210M22.5 197V210M23.5 199V212M24.5 199V210M25.5 198V212M26.5 199V210M27.5 199V213M28.5 199V211M29.5 201V209M30.5 200V209M31.5 200V209M32.5 200V209M33.5 197V211M34.5 199V211M35.5 197V209M36.5 199V210M37.5 198V211M38.5 198V213M39.5 197V210M40.5 197V210M41.5 197V210M42.5 195V212M43.5 199V210M44.5 197V210M45.5 199V209M46.5 199V210M47.5 198V210M48.5 199V210M49.5 199V210M50.5 200V210M51.5 200V210M52.5 198V209M53.5 199V209M54.5 197V209M55.5 199V211M56.5 199V210M57.5 196V210M58.5 200V210M59.5 201V210M60.5 201V209M61.5 197V209M62.5 199V213M63.5 200V210M64.5 200V211M65.5 198V210M66.5 200V209M67.5 199V209M68.5 197V209M69.5 197V211M70.5 201V210M71.5 201V209M72.5 201V209M73.5 195V209M74.5 201V210M75.5 201V212M76.5 200V214M77.5 200V211M78.5 199V210M79.5 201V209M80.5 200V211M81.5 199V211M82.5 198V210M83.5 199V210M84.5 199V212M85.5 198V211M86.5 198V212M87.5 199V210M88.5 199V210M89.5 199V210M90.5 200V210M91.5 198V210M92.5 199V213M93.5 199V210M94.5 199V211M95.5 199V210M96.5 201V210M97.5 199V210M98.5 198V210M99.5 199V210M100.5 199V210M101.5 199V210M102.5 199V211M103.5 200V209M104.5 200V209M105.5 196V209M106.5 200V209M107.5 198V209M108.5 199V209M109.5 197V209M110.5 198V209M111.5 198V212M112.5 196V209M113.5 199V210M114.5 199V210M115.5 198V215M116.5 200V215M117.5 200V210M118.5 200V212M119.5 200V210M120.5 200V211M121.5 199V210M122.5 199V213M123.5 199V212M124.5 199V210M125.5 199V210M126.5 199V214M127.5 199V210M128.5 195V213M129.5 195V210M130.5 199V211M131.5 199V213M132.5 198V210M133.5 200V210M134.5 200V210M135.5 200V210M136.5 200V212M137.5 198V210M138.5 200V212M139.5 200V209M140.5 198V209M141.5 199V209M142.5 198V210M143.5 199V210M144.5 199V210M145.5 199V209M146.5 199V209M147.5 199V209M148.5 199V209M149.5 200V213M150.5 198V209M151.5 200V209M152.5 200V211M153.5 200V209M154.5 200V209M155.5 200V211M156.5 200V210M157.5 201V210M158.5 201V214M159.5 201V210M160.5 201V211M161.5 199V210M162.5 197V209M163.5 200V209M164.5 200V209M165.5 201V210M166.5 201V210M167.5 197V210M168.5 199V211M169.5 198V210M170.5 200V211M171.5 200V209M172.5 200V209M173.5 198V212M174.5 200V209M175.5 200V211M176.5 199V211M177.5 199V210M178.5 200V210M179.5 200V210M180.5 200V211M181.5 201V212M182.5 199V210M183.5 199V209M184.5 199V209M185.5 199V211M186.5 199V209M187.5 200V209M188.5 199V209M189.5 198V210M190.5 199V210M191.5 200V211M192.5 200V209M193.5 200V209M194.5 200V209M195.5 199V210M196.5 197V210M197.5 199V210M198.5 199V210M199.5 198V209M200.5 200V209M201.5 201V213M202.5 201V211M203.5 201V211M204.5 200V213M205.5 197V210M206.5 196V212M207.5 200V214M208.5 198V211M209.5 195V211M210.5 199V211M211.5 199V210M212.5 199V214M213.5 200V212M214.5 200V210M215.5 200V211M216.5 200V210M217.5 200V210M218.5 198V209M219.5 196V211M220.5 197V215M221.5 198V211M222.5 200V211M223.5 199V211M224.5 196V211M225.5 199V209M226.5 199V209M227.5 199V209M228.5 195V210M229.5 199V210M230.5 199V210M231.5 196V210M232.5 200V210M233.5 200V210M234.5 199V210M235.5 201V210M236.5 201V211M237.5 198V210M238.5 199V209M239.5 199V209M240.5 197V209M241.5 201V209M242.5 200V209M243.5 201V212M244.5 201V209M245.5 201V209M246.5 198V209M247.5 199V209M248.5 199V209M249.5 201V209M250.5 201V211M251.5 201V210M252.5 201V212M253.5 201V210M254.5 200V213M255.5 199V213M256.5 199V210M257.5 199V209M258.5 197V212M259.5 199V209M260.5 199V210M261.5 197V210M262.5 199V209M263.5 199V209M264.5 199V209M265.5 197V209M266.5 200V211M267.5 198V209M268.5 200V209M269.5 200V209M270.5 201V212M271.5 201V213M272.5 201V211M273.5 201V211M274.5 196V211M275.5 199V211M276.5 198V211M277.5 199V211M278.5 200V211M279.5 199V211M280.5 199V211M281.5 199V211M282.5 199V210M283.5 196V210M284.5 198V210M285.5 198V209M286.5 200V209M287.5 199V209M288.5 201V209M289.5 197V209M290.5 199V209M291.5 201V212M292.5 201V210M293.5 200V210M294.5 199V210M295.5 199V213M296.5 198V210M297.5 199V210M298.5 201V211M299.5 201V213M300.5 201V211M301.5 200V211M302.5 201V211M303.5 200V210M304.5 200V211M305.5 200V210M306.5 200V210M307.5 199V210M308.5 200V210M309.5 200V210M310.5 200V211M311.5 198V211M312.5 196V211M313.5 200V211M314.5 200V211M315.5 200V211M517.5 200V210M518.5 198V212M519.5 198V212M520.5 200V212M521.5 200V210M522.5 201V210M523.5 199V210M524.5 196V210M525.5 201V210M526.5 200V214M527.5 199V210M528.5 200V210M529.5 201V210M530.5 201V210M531.5 201V213M532.5 201V210M533.5 201V210M534.5 201V209M535.5 197V209M536.5 201V209M537.5 200V211M538.5 201V211M539.5 201V211M540.5 201V210M541.5 201V211M542.5 200V213M543.5 199V209M544.5 201V209M545.5 201V209M546.5 199V212M547.5 201V209M548.5 199V211M549.5 199V212M550.5 199V211M551.5 200V211M552.5 200V214M553.5 200V214M554.5 200V212M555.5 200V210M556.5 200V210M557.5 200V210M558.5 200V212M559.5 200V211M560.5 199V211M561.5 201V211M562.5 199V209M563.5 198V209M564.5 200V209M565.5 200V210M566.5 200V211M567.5 200V211M568.5 200V214M569.5 201V209M570.5 200V210M571.5 197V212M572.5 200V210M573.5 197V210M574.5 200V210M575.5 201V210M576.5 199V210M577.5 201V210M578.5 198V210M579.5 198V210M580.5 200V214M581.5 200V214M582.5 199V210M583.5 198V210M584.5 200V214M585.5 199V213M586.5 199V210M587.5 200V210M588.5 200V210M589.5 200V210M590.5 200V210M591.5 199V211M592.5 200V215M593.5 200V211M594.5 200V209M595.5 199V211M596.5 200V211M597.5 200V209M598.5 201V209M599.5 199V211M600.5 201V211M601.5 200V211M602.5 199V213M603.5 199V215M604.5 199V212M605.5 200V211M606.5 201V211M607.5 201V211M608.5 201V211M609.5 201V212M610.5 200V211M611.5 201V210M612.5 200V211M613.5 201V210M614.5 200V209M615.5 200V212M616.5 200V209M617.5 200V210M618.5 200V210M619.5 200V210M620.5 200V214M621.5 200V212M622.5 200V210M623.5 200V211M624.5 200V211M625.5 200V211M626.5 200V211M627.5 199V211M628.5 200V211M629.5 200V210M630.5 199V210M631.5 199V210M632.5 199V210M633.5 196V210M634.5 199V212M635.5 199V210M636.5 199V210M637.5 199V210M638.5 199V209M639.5 200V211M640.5 201V210M641.5 200V212M642.5 200V210M643.5 198V211M644.5 197V211M645.5 199V210M646.5 199V210M647.5 200V210M648.5 200V210M649.5 199V212M650.5 199V210M651.5 199V212M652.5 199V211M653.5 199V212M654.5 198V210M655.5 200V213M656.5 198V211M657.5 200V211M658.5 201V210M659.5 201V210M660.5 199V210M661.5 196V210M662.5 201V210M663.5 201V210M664.5 200V211M665.5 200V210M666.5 200V209M667.5 200V210M668.5 200V211M669.5 200V210M670.5 198V209M671.5 200V209M672.5 197V209M673.5 201V209M674.5 200V210M675.5 201V211M676.5 200V213M677.5 196V211M678.5 201V211M679.5 197V210M680.5 199V210M681.5 197V210M682.5 199V210M683.5 199V210M684.5 199V210M685.5 199V209M686.5 199V210M687.5 200V210M688.5 201V210M689.5 201V211M690.5 201V210M691.5 201V213M692.5 201V209M693.5 200V211M694.5 201V209M695.5 199V209M696.5 201V210M697.5 200V213M698.5 200V213M699.5 200V211M700.5 198V212M701.5 198V212M702.5 201V210M703.5 200V210M704.5 199V211M705.5 200V210M706.5 199V209M707.5 198V212M708.5 200V209M709.5 200V209M710.5 199V212M711.5 199V209M712.5 199V213M713.5 199V215M714.5 197V211M715.5 201V210M917.5 200V210M918.5 199V210M919.5 200V210M920.5 200V211M921.5 200V210M922.5 200V210M923.5 200V211M924.5 196V210M925.5 200V210M926.5 196V210M927.5 200V210M928.5 199V211M929.5 200V210M930.5 200V211M931.5 200V213M932.5 199V210M933.5 200V210M934.5 200V210M935.5 199V214M936.5 200V210M937.5 198V211M938.5 199V210M939.5 201V211M940.5 200V211M941.5 200V209M942.5 201V209M943.5 196V212M944.5 197V209M945.5 196V209M946.5 199V211M947.5 198V211M948.5 200V212M949.5 199V212M950.5 200V213M951.5 201V211M952.5 199V209M953.5 199V210M954.5 201V209M955.5 201V212M956.5 200V212M957.5 201V209M958.5 200V211M959.5 200V210M960.5 199V214M961.5 199V211M962.5 200V210M963.5 201V210M964.5 201V212M965.5 201V211M966.5 201V209M967.5 200V209M968.5 199V209M969.5 200V210M970.5 199V214M971.5 199V209M972.5 199V209M973.5 199V209M974.5 199V210M975.5 199V211M976.5 200V211M977.5 200V210M978.5 201V212M979.5 199V210M980.5 200V209M981.5 200V211M982.5 198V211M983.5 201V211M984.5 197V211M985.5 200V210M986.5 200V213M987.5 199V210M988.5 200V210M989.5 199V210M990.5 200V211M991.5 200V213M992.5 196V212M993.5 198V210M994.5 199V210M995.5 199V210M996.5 199V213M997.5 199V213M998.5 200V211M999.5 200V209M1000.5 200V209M1001.5 198V210M1002.5 198V209M1003.5 200V209M1004.5 200V209M1005.5 200V214M1006.5 200V212M1007.5 200V211M1008.5 198V211M1009.5 200V211M1010.5 200V210M1011.5 198V210M1012.5 199V211M1013.5 201V211M1014.5 201V211M1015.5 201V211M316.5 202V433M317.5 425V441M318.5 432V447M319.5 437V451M320.5 440V454M321.5 442V456M322.5 445V455M323.5 445V455M324.5 444V454M325.5 444V454M326.5 443V452M327.5 442V452M328.5 444V452M329.5 442V454M330.5 443V452M331.5 442V456M332.5 440V454M333.5 442V453M334.5 444V452M335.5 443V456M336.5 442V452M337.5 442V452M338.5 442V452M339.5 443V452M340.5 443V453M341.5 443V452M342.5 442V452M343.5 444V454M344.5 439V452M345.5 444V453M346.5 444V451M347.5 444V452M348.5 444V451M349.5 444V451M350.5 444V451M351.5 441V452M352.5 443V452M353.5 443V452M354.5 443V452M355.5 443V453M356.5 442V453M357.5 443V453M358.5 443V454M359.5 441V454M360.5 441V452M361.5 443V452M362.5 443V453M363.5 443V453M364.5 443V453M365.5 439V451M366.5 439V453M367.5 439V453M368.5 444V453M369.5 442V453M370.5 443V456M371.5 444V452M372.5 443V452M373.5 441V453M374.5 444V451M375.5 444V451M376.5 440V455M377.5 442V452M378.5 443V456M379.5 443V453M380.5 439V452M381.5 442V452M382.5 439V452M383.5 442V453M384.5 439V453M385.5 442V453M386.5 442V453M387.5 440V453M388.5 442V453M389.5 443V452M390.5 443V452M391.5 443V452M392.5 443V454M393.5 443V452M394.5 441V455M395.5 440V452M396.5 443V453M397.5 443V454M398.5 442V453M399.5 443V453M400.5 443V454M401.5 443V455M402.5 442V455M403.5 438V456M404.5 442V452M405.5 444V454M406.5 444V452M407.5 442V451M408.5 442V451M409.5 444V454M410.5 443V451M411.5 442V455M412.5 443V452M413.5 442V452M414.5 442V452M415.5 442V452M416.5 439V454M417.5 438V453M418.5 442V454M419.5 444V452M420.5 442V452M421.5 444V452M422.5 441V452M423.5 444V452M424.5 442V452M425.5 442V452M426.5 442V452M427.5 443V452M428.5 443V452M429.5 442V452M430.5 443V452M431.5 443V452M432.5 441V451M433.5 443V451M434.5 443V452M435.5 441V453M436.5 440V451M437.5 442V451M438.5 441V455M439.5 441V453M440.5 442V452M441.5 442V452M442.5 443V452M443.5 443V454M444.5 442V451M445.5 440V451M446.5 443V451M447.5 443V454M448.5 441V453M449.5 443V452M450.5 440V452M451.5 441V454M452.5 444V452M453.5 443V453M454.5 443V454M455.5 439V452M456.5 439V451M457.5 442V451M458.5 440V453M459.5 442V451M460.5 441V454M461.5 443V456M462.5 441V453M463.5 443V456M464.5 443V456M465.5 442V453M466.5 442V455M467.5 442V453M468.5 442V453M469.5 443V456M470.5 442V452M471.5 442V452M472.5 442V454M473.5 440V452M474.5 443V452M475.5 443V453M476.5 443V452M477.5 443V452M478.5 443V454M479.5 442V456M480.5 442V452M481.5 442V452M482.5 444V452M483.5 442V452M484.5 444V452M485.5 442V452M486.5 442V454M487.5 440V452M488.5 443V452M489.5 443V452M490.5 440V452M491.5 444V453M492.5 444V455M493.5 440V452M494.5 441V452M495.5 443V454M496.5 441V452M497.5 443V452M498.5 442V452M499.5 444V452M500.5 444V452M501.5 444V454M502.5 442V452M503.5 441V452M504.5 442V451M505.5 444V451M506.5 444V452M507.5 443V452M508.5 443V452M509.5 442V452M510.5 441V453M511.5 444V454M512.5 441V452M513.5 444V451M514.5 444V451M716.5 202V433M717.5 425V441M718.5 432V447M719.5 437V451M720.5 440V454M721.5 442V456M722.5 445V456M723.5 445V454M724.5 444V454M725.5 443V454M726.5 443V453M727.5 443V453M728.5 444V453M729.5 443V452M730.5 444V453M731.5 443V452M732.5 444V456M733.5 442V453M734.5 442V452M735.5 444V454M736.5 444V455M737.5 443V452M738.5 443V451M739.5 443V452M740.5 443V452M741.5 442V454M742.5 443V453M743.5 440V454M744.5 439V453M745.5 443V451M746.5 443V451M747.5 443V451M748.5 443V453M749.5 442V453M750.5 443V453M751.5 443V453M752.5 440V454M753.5 442V455M754.5 442V455M755.5 442V452M756.5 442V452M757.5 442V452M758.5 442V452M759.5 442V452M760.5 442V455M761.5 443V452M762.5 443V454M763.5 443V452M764.5 439V452M765.5 442V452M766.5 442V452M767.5 442V452M768.5 441V452M769.5 442V452M770.5 442V452M771.5 442V452M772.5 442V451M773.5 442V452M774.5 439V452M775.5 441V452M776.5 442V451M777.5 439V451M778.5 442V451M779.5 440V451M780.5 442V451M781.5 443V451M782.5 442V451M783.5 443V451M784.5 443V451M785.5 443V451M786.5 442V452M787.5 442V453M788.5 438V453M789.5 442V453M790.5 442V453M791.5 442V453M792.5 442V453M793.5 440V452M794.5 443V452M795.5 443V454M796.5 443V452M797.5 443V452M798.5 439V452M799.5 443V454M800.5 442V454M801.5 442V455M802.5 444V452M803.5 443V451M804.5 440V455M805.5 443V453M806.5 443V452M807.5 443V452M808.5 442V452M809.5 443V452M810.5 443V454M811.5 443V455M812.5 442V456M813.5 439V452M814.5 443V452M815.5 442V455M816.5 443V452M817.5 441V453M818.5 442V452M819.5 441V454M820.5 443V452M821.5 443V456M822.5 443V452M823.5 439V451M824.5 444V451M825.5 444V452M826.5 444V452M827.5 442V455M828.5 444V456M829.5 443V452M830.5 442V456M831.5 444V451M832.5 444V451M833.5 443V451M834.5 444V451M835.5 443V451M836.5 443V451M837.5 441V451M838.5 442V453M839.5 440V453M840.5 443V455M841.5 443V453M842.5 443V453M843.5 443V453M844.5 443V453M845.5 443V453M846.5 440V452M847.5 443V452M848.5 443V452M849.5 443V453M850.5 441V454M851.5 443V454M852.5 443V452M853.5 442V453M854.5 443V453M855.5 443V453M856.5 442V454M857.5 438V452M858.5 442V452M859.5 442V455M860.5 441V455M861.5 442V452M862.5 442V452M863.5 442V453M864.5 442V452M865.5 442V452M866.5 442V452M867.5 442V451M868.5 442V451M869.5 441V451M870.5 442V452M871.5 442V451M872.5 440V451M873.5 443V451M874.5 443V454M875.5 442V452M876.5 443V451M877.5 440V452M878.5 443V452M879.5 443V452M880.5 443V452M881.5 441V454M882.5 443V452M883.5 439V452M884.5 442V454M885.5 443V452M886.5 443V453M887.5 443V452M888.5 443V452M889.5 442V454M890.5 443V456M891.5 441V453M892.5 441V455M893.5 443V457M894.5 439V452M895.5 442V455M896.5 442V452M897.5 442V452M898.5 444V454M899.5 444V452M900.5 444V456M901.5 443V452M902.5 444V452M903.5 444V452M904.5 444V452M905.5 443V452M906.5 443V453M907.5 443V454M908.5 443V454M909.5 443V453M910.5 443V453M911.5 443V452M912.5 438V452M913.5 440V452M914.5 442V452M515.5 206V448M915.5 206V448" stroke="#f8f800" stroke-width="1" fill="none"/><path d="M515.5 232V308M715.5 214V300M315.5 214V300" stroke="#00f8f8" stroke-width="1" fill="none"/><path d="M16 35h1001v1h-1001zM16 635h1001v1h-1001zM16 35h1v601h-1zM1016 35h1v601h-1zM36 36h1v6h-1zM36 629h1v6h-1zM56 36h1v6h-1zM56 629h1v6h-1zM76 36h1v6h-1zM76 629h1v6h-1zM96 36h1v6h-1zM96 629h1v6h-1zM116 36h1v10h-1zM116 625h1v10h-1zM136 36h1v6h-1zM136 629h1v6h-1zM156 36h1v6h-1zM156 629h1v6h-1zM176 36h1v6h-1zM176 629h1v6h-1zM196 36h1v6h-1zM196 629h1v6h-1zM216 36h1v10h-1zM216 625h1v10h-1zM236 36h1v6h-1zM236 629h1v6h-1zM256 36h1v6h-1zM256 629h1v6h-1zM276 36h1v6h-1zM276 629h1v6h-1zM296 36h1v6h-1zM296 629h1v6h-1zM316 36h1v10h-1zM316 625h1v10h-1zM336 36h1v6h-1zM336 629h1v6h-1zM356 36h1v6h-1zM356 629h1v6h-1zM376 36h1v6h-1zM376 629h1v6h-1zM396 36h1v6h-1zM396 629h1v6h-1zM416 36h1v10h-1zM416 625h1v10h-1zM436 36h1v6h-1zM436 629h1v6h-1zM456 36h1v6h-1zM456 629h1v6h-1zM476 36h1v6h-1zM476 629h1v6h-1zM496 36h1v6h-1zM496 629h1v6h-1zM516 36h1v10h-1zM516 625h1v10h-1zM536 36h1v6h-1zM536 629h1v6h-1zM556 36h1v6h-1zM556 629h1v6h-1zM576 36h1v6h-1zM576 629h1v6h-1zM596 36h1v6h-1zM596 629h1v6h-1zM616 36h1v10h-1zM616 625h1v10h-1zM636 36h1v6h-1zM636 629h1v6h-1zM656 36h1v6h-1zM656 629h1v6h-1zM676 36h1v6h-1zM676 629h1v6h-1zM696 36h1v6h-1zM696 629h1v6h-1zM716 36h1v10h-1zM716 625h1v10h-1zM736 36h1v6h-1zM736 629h1v6h-1zM756 36h1v6h-1zM756 629h1v6h-1zM776 36h1v6h-1zM776 629h1v6h-1zM796 36h1v6h-1zM796 629h1v6h-1zM816 36h1v10h-1zM816 625h1v10h-1zM836 36h1v6h-1zM836 629h1v6h-1zM856 36h1v6h-1zM856 629h1v6h-1zM876 36h1v6h-1zM876 629h1v6h-1zM896 36h1v6h-1zM896 629h1v6h-1zM916 36h1v10h-1zM916 625h1v10h-1zM936 36h1v6h-1zM936 629h1v6h-1zM956 36h1v6h-1zM956 629h1v6h-1zM976 36h1v6h-1zM976 629h1v6h-1zM996 36h1v6h-1zM996 629h1v6h-1zM17 47h6v1h-6zM1010 47h6v1h-6zM17 59h6v1h-6zM1010 59h6v1h-6zM17 71h6v1h-6zM1010 71h6v1h-6zM17 83h6v1h-6zM1010 83h6v1h-6zM17 95h10v1h-10zM1006 95h10v1h-10zM17 107h6v1h-6zM1010 107h6v1h-6zM17 119h6v1h-6zM1010 119h6v1h-6zM17 131h6v1h-6zM1010 131h6v1h-6zM17 143h6v1h-6zM1010 143h6v1h-6zM17 155h10v1h-10zM1006 155h10v1h-10zM17 167h6v1h-6zM1010 167h6v1h-6zM17 179h6v1h-6zM1010 179h6v1h-6zM17 191h6v1h-6zM1010 191h6v1h-6zM17 203h6v1h-6zM1010 203h6v1h-6zM17 215h10v1h-10zM1006 215h10v1h-10zM17 227h6v1h-6zM1010 227h6v1h-6zM17 239h6v1h-6zM1010 239h6v1h-6zM17 251h6v1h-6zM1010 251h6v1h-6zM17 263h6v1h-6zM1010 263h6v1h-6zM17 275h10v1h-10zM1006 275h10v1h-10zM17 287h6v1h-6zM1010 287h6v1h-6zM17 299h6v1h-6zM1010 299h6v1h-6zM17 311h6v1h-6zM1010 311h6v1h-6zM17 323h6v1h-6zM1010 323h6v1h-6zM17 335h10v1h-10zM1006 335h10v1h-10zM17 347h6v1h-6zM1010 347h6v1h-6zM17 359h6v1h-6zM1010 359h6v1h-6zM17 371h6v1h-6zM1010 371h6v1h-6zM17 383h6v1h-6zM1010 383h6v1h-6zM17 395h10v1h-10zM1006 395h10v1h-10zM17 407h6v1h-6zM1010 407h6v1h-6zM17 419h6v1h-6zM1010 419h6v1h-6zM17 431h6v1h-6zM1010 431h6v1h-6zM17 443h6v1h-6zM1010 443h6v1h-6zM17 455h10v1h-10zM1006 455h10v1h-10zM17 467h6v1h-6zM1010 467h6v1h-6zM17 479h6v1h-6zM1010 479h6v1h-6zM17 491h6v1h-6zM1010 491h6v1h-6zM17 503h6v1h-6zM1010 503h6v1h-6zM17 515h10v1h-10zM1006 515h10v1h-10zM17 527h6v1h-6zM1010 527h6v1h-6zM17 539h6v1h-6zM1010 539h6v1h-6zM17 551h6v1h-6zM1010 551h6v1h-6zM17 563h6v1h-6zM1010 563h6v1h-6zM17 575h10v1h-10zM1006 575h10v1h-10zM17 587h6v1h-6zM1010 587h6v1h-6zM17 599h6v1h-6zM1010 599h6v1h-6zM17 611h6v1h-6zM1010 611h6v1h-6zM17 623h6v1h-6zM1010 623h6v1h-6z" fill="#a09478"/><path d="M16 335h1001v1h-1001zM36 333h1v6h-1zM56 333h1v6h-1zM76 333h1v6h-1zM96 333h1v6h-1zM116 330h1v11h-1zM136 333h1v6h-1zM156 333h1v6h-1zM176 333h1v6h-1zM196 333h1v6h-1zM216 330h1v11h-1zM236 333h1v6h-1zM256 333h1v6h-1zM276 333h1v6h-1zM296 333h1v6h-1zM316 330h1v11h-1zM336 333h1v6h-1zM356 333h1v6h-1zM376 333h1v6h-1zM396 333h1v6h-1zM416 330h1v11h-1zM436 333h1v6h-1zM456 333h1v6h-1zM476 333h1v6h-1zM496 333h1v6h-1zM536 333h1v6h-1zM556 333h1v6h-1zM576 333h1v6h-1zM596 333h1v6h-1zM616 330h1v11h-1zM636 333h1v6h-1zM656 333h1v6h-1zM676 333h1v6h-1zM696 333h1v6h-1zM716 330h1v11h-1zM736 333h1v6h-1zM756 333h1v6h-1zM776 333h1v6h-1zM796 333h1v6h-1zM816 330h1v11h-1zM836 333h1v6h-1zM856 333h1v6h-1zM876 333h1v6h-1zM896 333h1v6h-1zM916 330h1v11h-1zM936 333h1v6h-1zM956 333h1v6h-1zM976 333h1v6h-1zM996 333h1v6h-1zM513 47h7v1h-7zM513 59h7v1h-7zM513 71h7v1h-7zM513 83h7v1h-7zM511 95h11v1h-11zM513 107h7v1h-7zM513 119h7v1h-7zM513 131h7v1h-7zM513 143h7v1h-7zM511 155h11v1h-11zM513 167h7v1h-7zM513 179h7v1h-7zM513 191h7v1h-7zM513 203h7v1h-7zM511 215h11v1h-11zM513 227h7v1h-7zM513 239h7v1h-7zM513 251h7v1h-7zM513 263h7v1h-7zM511 275h11v1h-11zM513 287h7v1h-7zM513 299h7v1h-7zM513 311h7v1h-7zM513 323h7v1h-7zM513 347h7v1h-7zM513 359h7v1h-7zM513 371h7v1h-7zM513 383h7v1h-7zM511 395h11v1h-11zM513 407h7v1h-7zM513 419h7v1h-7zM513 431h7v1h-7zM513 443h7v1h-7zM511 455h11v1h-11zM513 467h7v1h-7zM513 479h7v1h-7zM513 491h7v1h-7zM513 503h7v1h-7zM511 515h11v1h-11zM513 527h7v1h-7zM513 539h7v1h-7zM513 551h7v1h-7zM513 563h7v1h-7zM511 575h11v1h-11zM513 587h7v1h-7zM513 599h7v1h-7zM513 611h7v1h-7zM513 623h7v1h-7z" fill="#948a6e"/><path d="M36 96h1v1h-1zM36 156h1v1h-1zM36 216h1v1h-1zM36 276h1v1h-1zM36 396h1v1h-1zM36 456h1v1h-1zM36 516h1v1h-1zM36 576h1v1h-1zM56 96h1v1h-1zM56 156h1v1h-1zM56 216h1v1h-1zM56 276h1v1h-1zM56 396h1v1h-1zM56 456h1v1h-1zM56 516h1v1h-1zM56 576h1v1h-1zM76 96h1v1h-1zM76 156h1v1h-1zM76 216h1v1h-1zM76 276h1v1h-1zM76 396h1v1h-1zM76 456h1v1h-1zM76 516h1v1h-1zM76 576h1v1h-1zM96 96h1v1h-1zM96 156h1v1h-1zM96 216h1v1h-1zM96 276h1v1h-1zM96 396h1v1h-1zM96 456h1v1h-1zM96 516h1v1h-1zM96 576h1v1h-1zM116 48h1v1h-1zM116 60h1v1h-1zM116 72h1v1h-1zM116 84h1v1h-1zM116 96h1v1h-1zM116 108h1v1h-1zM116 120h1v1h-1zM116 132h1v1h-1zM116 144h1v1h-1zM116 156h1v1h-1zM116 168h1v1h-1zM116 180h1v1h-1zM116 192h1v1h-1zM116 204h1v1h-1zM116 216h1v1h-1zM116 228h1v1h-1zM116 240h1v1h-1zM116 252h1v1h-1zM116 264h1v1h-1zM116 276h1v1h-1zM116 288h1v1h-1zM116 300h1v1h-1zM116 312h1v1h-1zM116 324h1v1h-1zM116 348h1v1h-1zM116 360h1v1h-1zM116 372h1v1h-1zM116 384h1v1h-1zM116 396h1v1h-1zM116 408h1v1h-1zM116 420h1v1h-1zM116 432h1v1h-1zM116 444h1v1h-1zM116 456h1v1h-1zM116 468h1v1h-1zM116 480h1v1h-1zM116 492h1v1h-1zM116 504h1v1h-1zM116 516h1v1h-1zM116 528h1v1h-1zM116 540h1v1h-1zM116 552h1v1h-1zM116 564h1v1h-1zM116 576h1v1h-1zM116 588h1v1h-1zM116 600h1v1h-1zM116 612h1v1h-1zM116 624h1v1h-1zM136 96h1v1h-1zM136 156h1v1h-1zM136 216h1v1h-1zM136 276h1v1h-1zM136 396h1v1h-1zM136 456h1v1h-1zM136 516h1v1h-1zM136 576h1v1h-1zM156 96h1v1h-1zM156 156h1v1h-1zM156 216h1v1h-1zM156 276h1v1h-1zM156 396h1v1h-1zM156 456h1v1h-1zM156 516h1v1h-1zM156 576h1v1h-1zM176 96h1v1h-1zM176 156h1v1h-1zM176 216h1v1h-1zM176 276h1v1h-1zM176 396h1v1h-1zM176 456h1v1h-1zM176 516h1v1h-1zM176 576h1v1h-1zM196 96h1v1h-1zM196 156h1v1h-1zM196 216h1v1h-1zM196 276h1v1h-1zM196 396h1v1h-1zM196 456h1v1h-1zM196 516h1v1h-1zM196 576h1v1h-1zM216 48h1v1h-1zM216 60h1v1h-1zM216 72h1v1h-1zM216 84h1v1h-1zM216 96h1v1h-1zM216 108h1v1h-1zM216 120h1v1h-1zM216 132h1v1h-1zM216 144h1v1h-1zM216 156h1v1h-1zM216 168h1v1h-1zM216 180h1v1h-1zM216 192h1v1h-1zM216 204h1v1h-1zM216 216h1v1h-1zM216 228h1v1h-1zM216 240h1v1h-1zM216 252h1v1h-1zM216 264h1v1h-1zM216 276h1v1h-1zM216 288h1v1h-1zM216 300h1v1h-1zM216 312h1v1h-1zM216 324h1v1h-1zM216 348h1v1h-1zM216 360h1v1h-1zM216 372h1v1h-1zM216 384h1v1h-1zM216 396h1v1h-1zM216 408h1v1h-1zM216 420h1v1h-1zM216 432h1v1h-1zM216 444h1v1h-1zM216 456h1v1h-1zM216 468h1v1h-1zM216 480h1v1h-1zM216 492h1v1h-1zM216 504h1v1h-1zM216 516h1v1h-1zM216 528h1v1h-1zM216 540h1v1h-1zM216 552h1v1h-1zM216 564h1v1h-1zM216 576h1v1h-1zM216 588h1v1h-1zM216 600h1v1h-1zM216 612h1v1h-1zM216 624h1v1h-1zM236 96h1v1h-1zM236 156h1v1h-1zM236 216h1v1h-1zM236 276h1v1h-1zM236 396h1v1h-1zM236 456h1v1h-1zM236 516h1v1h-1zM236 576h1v1h-1zM256 96h1v1h-1zM256 156h1v1h-1zM256 216h1v1h-1zM256 276h1v1h-1zM256 396h1v1h-1zM256 456h1v1h-1zM256 516h1v1h-1zM256 576h1v1h-1zM276 96h1v1h-1zM276 156h1v1h-1zM276 216h1v1h-1zM276 276h1v1h-1zM276 396h1v1h-1zM276 456h1v1h-1zM276 516h1v1h-1zM276 576h1v1h-1zM296 96h1v1h-1zM296 156h1v1h-1zM296 216h1v1h-1zM296 276h1v1h-1zM296 396h1v1h-1zM296 456h1v1h-1zM296 516h1v1h-1zM296 576h1v1h-1zM316 48h1v1h-1zM316 60h1v1h-1zM316 72h1v1h-1zM316 84h1v1h-1zM316 96h1v1h-1zM316 108h1v1h-1zM316 120h1v1h-1zM316 132h1v1h-1zM316 144h1v1h-1zM316 156h1v1h-1zM316 168h1v1h-1zM316 180h1v1h-1zM316 192h1v1h-1zM316 204h1v1h-1zM316 216h1v1h-1zM316 228h1v1h-1zM316 240h1v1h-1zM316 252h1v1h-1zM316 264h1v1h-1zM316 276h1v1h-1zM316 288h1v1h-1zM316 300h1v1h-1zM316 312h1v1h-1zM316 324h1v1h-1zM316 348h1v1h-1zM316 360h1v1h-1zM316 372h1v1h-1zM316 384h1v1h-1zM316 396h1v1h-1zM316 408h1v1h-1zM316 420h1v1h-1zM316 432h1v1h-1zM316 444h1v1h-1zM316 456h1v1h-1zM316 468h1v1h-1zM316 480h1v1h-1zM316 492h1v1h-1zM316 504h1v1h-1zM316 516h1v1h-1zM316 528h1v1h-1zM316 540h1v1h-1zM316 552h1v1h-1zM316 564h1v1h-1zM316 576h1v1h-1zM316 588h1v1h-1zM316 600h1v1h-1zM316 612h1v1h-1zM316 624h1v1h-1zM336 96h1v1h-1zM336 156h1v1h-1zM336 216h1v1h-1zM336 276h1v1h-1zM336 396h1v1h-1zM336 456h1v1h-1zM336 516h1v1h-1zM336 576h1v1h-1zM356 96h1v1h-1zM356 156h1v1h-1zM356 216h1v1h-1zM356 276h1v1h-1zM356 396h1v1h-1zM356 456h1v1h-1zM356 516h1v1h-1zM356 576h1v1h-1zM376 96h1v1h-1zM376 156h1v1h-1zM376 216h1v1h-1zM376 276h1v1h-1zM376 396h1v1h-1zM376 456h1v1h-1zM376 516h1v1h-1zM376 576h1v1h-1zM396 96h1v1h-1zM396 156h1v1h-1zM396 216h1v1h-1zM396 276h1v1h-1zM396 396h1v1h-1zM396 456h1v1h-1zM396 516h1v1h-1zM396 576h1v1h-1zM416 48h1v1h-1zM416 60h1v1h-1zM416 72h1v1h-1zM416 84h1v1h-1zM416 96h1v1h-1zM416 108h1v1h-1zM416 120h1v1h-1zM416 132h1v1h-1zM416 144h1v1h-1zM416 156h1v1h-1zM416 168h1v1h-1zM416 180h1v1h-1zM416 192h1v1h-1zM416 204h1v1h-1zM416 216h1v1h-1zM416 228h1v1h-1zM416 240h1v1h-1zM416 252h1v1h-1zM416 264h1v1h-1zM416 276h1v1h-1zM416 288h1v1h-1zM416 300h1v1h-1zM416 312h1v1h-1zM416 324h1v1h-1zM416 348h1v1h-1zM416 360h1v1h-1zM416 372h1v1h-1zM416 384h1v1h-1zM416 396h1v1h-1zM416 408h1v1h-1zM416 420h1v1h-1zM416 432h1v1h-1zM416 444h1v1h-1zM416 456h1v1h-1zM416 468h1v1h-1zM416 480h1v1h-1zM416 492h1v1h-1zM416 504h1v1h-1zM416 516h1v1h-1zM416 528h1v1h-1zM416 540h1v1h-1zM416 552h1v1h-1zM416 564h1v1h-1zM416 576h1v1h-1zM416 588h1v1h-1zM416 600h1v1h-1zM416 612h1v1h-1zM416 624h1v1h-1zM436 96h1v1h-1zM436 156h1v1h-1zM436 216h1v1h-1zM436 276h1v1h-1zM436 396h1v1h-1zM436 456h1v1h-1zM436 516h1v1h-1zM436 576h1v1h-1zM456 96h1v1h-1zM456 156h1v1h-1zM456 216h1v1h-1zM456 276h1v1h-1zM456 396h1v1h-1zM456 456h1v1h-1zM456 516h1v1h-1zM456 576h1v1h-1zM476 96h1v1h-1zM476 156h1v1h-1zM476 216h1v1h-1zM476 276h1v1h-1zM476 396h1v1h-1zM476 456h1v1h-1zM476 516h1v1h-1zM476 576h1v1h-1zM496 96h1v1h-1zM496 156h1v1h-1zM496 216h1v1h-1zM496 276h1v1h-1zM496 396h1v1h-1zM496 456h1v1h-1zM496 516h1v1h-1zM496 576h1v1h-1zM536 96h1v1h-1zM536 156h1v1h-1zM536 216h1v1h-1zM536 276h1v1h-1zM536 396h1v1h-1zM536 456h1v1h-1zM536 516h1v1h-1zM536 576h1v1h-1zM556 96h1v1h-1zM556 156h1v1h-1zM556 216h1v1h-1zM556 276h1v1h-1zM556 396h1v1h-1zM556 456h1v1h-1zM556 516h1v1h-1zM556 576h1v1h-1zM576 96h1v1h-1zM576 156h1v1h-1zM576 216h1v1h-1zM576 276h1v1h-1zM576 396h1v1h-1zM576 456h1v1h-1zM576 516h1v1h-1zM576 576h1v1h-1zM596 96h1v1h-1zM596 156h1v1h-1zM596 216h1v1h-1zM596 276h1v1h-1zM596 396h1v1h-1zM596 456h1v1h-1zM596 516h1v1h-1zM596 576h1v1h-1zM616 48h1v1h-1zM616 60h1v1h-1zM616 72h1v1h-1zM616 84h1v1h-1zM616 96h1v1h-1zM616 108h1v1h-1zM616 120h1v1h-1zM616 132h1v1h-1zM616 144h1v1h-1zM616 156h1v1h-1zM616 168h1v1h-1zM616 180h1v1h-1zM616 192h1v1h-1zM616 204h1v1h-1zM616 216h1v1h-1zM616 228h1v1h-1zM616 240h1v1h-1zM616 252h1v1h-1zM616 264h1v1h-1zM616 276h1v1h-1zM616 288h1v1h-1zM616 300h1v1h-1zM616 312h1v1h-1zM616 324h1v1h-1zM616 348h1v1h-1zM616 360h1v1h-1zM616 372h1v1h-1zM616 384h1v1h-1zM616 396h1v1h-1zM616 408h1v1h-1zM616 420h1v1h-1zM616 432h1v1h-1zM616 444h1v1h-1zM616 456h1v1h-1zM616 468h1v1h-1zM616 480h1v1h-1zM616 492h1v1h-1zM616 504h1v1h-1zM616 516h1v1h-1zM616 528h1v1h-1zM616 540h1v1h-1zM616 552h1v1h-1zM616 564h1v1h-1zM616 576h1v1h-1zM616 588h1v1h-1zM616 600h1v1h-1zM616 612h1v1h-1zM616 624h1v1h-1zM636 96h1v1h-1zM636 156h1v1h-1zM636 216h1v1h-1zM636 276h1v1h-1zM636 396h1v1h-1zM636 456h1v1h-1zM636 516h1v1h-1zM636 576h1v1h-1zM656 96h1v1h-1zM656 156h1v1h-1zM656 216h1v1h-1zM656 276h1v1h-1zM656 396h1v1h-1zM656 456h1v1h-1zM656 516h1v1h-1zM656 576h1v1h-1zM676 96h1v1h-1zM676 156h1v1h-1zM676 216h1v1h-1zM676 276h1v1h-1zM676 396h1v1h-1zM676 456h1v1h-1zM676 516h1v1h-1zM676 576h1v1h-1zM696 96h1v1h-1zM696 156h1v1h-1zM696 216h1v1h-1zM696 276h1v1h-1zM696 396h1v1h-1zM696 456h1v1h-1zM696 516h1v1h-1zM696 576h1v1h-1zM716 48h1v1h-1zM716 60h1v1h-1zM716 72h1v1h-1zM716 84h1v1h-1zM716 96h1v1h-1zM716 108h1v1h-1zM716 120h1v1h-1zM716 132h1v1h-1zM716 144h1v1h-1zM716 156h1v1h-1zM716 168h1v1h-1zM716 180h1v1h-1zM716 192h1v1h-1zM716 204h1v1h-1zM716 216h1v1h-1zM716 228h1v1h-1zM716 240h1v1h-1zM716 252h1v1h-1zM716 264h1v1h-1zM716 276h1v1h-1zM716 288h1v1h-1zM716 300h1v1h-1zM716 312h1v1h-1zM716 324h1v1h-1zM716 348h1v1h-1zM716 360h1v1h-1zM716 372h1v1h-1zM716 384h1v1h-1zM716 396h1v1h-1zM716 408h1v1h-1zM716 420h1v1h-1zM716 432h1v1h-1zM716 444h1v1h-1zM716 456h1v1h-1zM716 468h1v1h-1zM716 480h1v1h-1zM716 492h1v1h-1zM716 504h1v1h-1zM716 516h1v1h-1zM716 528h1v1h-1zM716 540h1v1h-1zM716 552h1v1h-1zM716 564h1v1h-1zM716 576h1v1h-1zM716 588h1v1h-1zM716 600h1v1h-1zM716 612h1v1h-1zM716 624h1v1h-1zM736 96h1v1h-1zM736 156h1v1h-1zM736 216h1v1h-1zM736 276h1v1h-1zM736 396h1v1h-1zM736 456h1v1h-1zM736 516h1v1h-1zM736 576h1v1h-1zM756 96h1v1h-1zM756 156h1v1h-1zM756 216h1v1h-1zM756 276h1v1h-1zM756 396h1v1h-1zM756 456h1v1h-1zM756 516h1v1h-1zM756 576h1v1h-1zM776 96h1v1h-1zM776 156h1v1h-1zM776 216h1v1h-1zM776 276h1v1h-1zM776 396h1v1h-1zM776 456h1v1h-1zM776 516h1v1h-1zM776 576h1v1h-1zM796 96h1v1h-1zM796 156h1v1h-1zM796 216h1v1h-1zM796 276h1v1h-1zM796 396h1v1h-1zM796 456h1v1h-1zM796 516h1v1h-1zM796 576h1v1h-1zM816 48h1v1h-1zM816 60h1v1h-1zM816 72h1v1h-1zM816 84h1v1h-1zM816 96h1v1h-1zM816 108h1v1h-1zM816 120h1v1h-1zM816 132h1v1h-1zM816 144h1v1h-1zM816 156h1v1h-1zM816 168h1v1h-1zM816 180h1v1h-1zM816 192h1v1h-1zM816 204h1v1h-1zM816 216h1v1h-1zM816 228h1v1h-1zM816 240h1v1h-1zM816 252h1v1h-1zM816 264h1v1h-1zM816 276h1v1h-1zM816 288h1v1h-1zM816 300h1v1h-1zM816 312h1v1h-1zM816 324h1v1h-1zM816 348h1v1h-1zM816 360h1v1h-1zM816 372h1v1h-1zM816 384h1v1h-1zM816 396h1v1h-1zM816 408h1v1h-1zM816 420h1v1h-1zM816 432h1v1h-1zM816 444h1v1h-1zM816 456h1v1h-1zM816 468h1v1h-1zM816 480h1v1h-1zM816 492h1v1h-1zM816 504h1v1h-1zM816 516h1v1h-1zM816 528h1v1h-1zM816 540h1v1h-1zM816 552h1v1h-1zM816 564h1v1h-1zM816 576h1v1h-1zM816 588h1v1h-1zM816 600h1v1h-1zM816 612h1v1h-1zM816 624h1v1h-1zM836 96h1v1h-1zM836 156h1v1h-1zM836 216h1v1h-1zM836 276h1v1h-1zM836 396h1v1h-1zM836 456h1v1h-1zM836 516h1v1h-1zM836 576h1v1h-1zM856 96h1v1h-1zM856 156h1v1h-1zM856 216h1v1h-1zM856 276h1v1h-1zM856 396h1v1h-1zM856 456h1v1h-1zM856 516h1v1h-1zM856 576h1v1h-1zM876 96h1v1h-1zM876 156h1v1h-1zM876 216h1v1h-1zM876 276h1v1h-1zM876 396h1v1h-1zM876 456h1v1h-1zM876 516h1v1h-1zM876 576h1v1h-1zM896 96h1v1h-1zM896 156h1v1h-1zM896 216h1v1h-1zM896 276h1v1h-1zM896 396h1v1h-1zM896 456h1v1h-1zM896 516h1v1h-1zM896 576h1v1h-1zM916 48h1v1h-1zM916 60h1v1h-1zM916 72h1v1h-1zM916 84h1v1h-1zM916 96h1v1h-1zM916 108h1v1h-1zM916 120h1v1h-1zM916 132h1v1h-1zM916 144h1v1h-1zM916 156h1v1h-1zM916 168h1v1h-1zM916 180h1v1h-1zM916 192h1v1h-1zM916 204h1v1h-1zM916 216h1v1h-1zM916 228h1v1h-1zM916 240h1v1h-1zM916 252h1v1h-1zM916 264h1v1h-1zM916 276h1v1h-1zM916 288h1v1h-1zM916 300h1v1h-1zM916 312h1v1h-1zM916 324h1v1h-1zM916 348h1v1h-1zM916 360h1v1h-1zM916 372h1v1h-1zM916 384h1v1h-1zM916 396h1v1h-1zM916 408h1v1h-1zM916 420h1v1h-1zM916 432h1v1h-1zM916 444h1v1h-1zM916 456h1v1h-1zM916 468h1v1h-1zM916 480h1v1h-1zM916 492h1v1h-1zM916 504h1v1h-1zM916 516h1v1h-1zM916 528h1v1h-1zM916 540h1v1h-1zM916 552h1v1h-1zM916 564h1v1h-1zM916 576h1v1h-1zM916 588h1v1h-1zM916 600h1v1h-1zM916 612h1v1h-1zM916 624h1v1h-1zM936 96h1v1h-1zM936 156h1v1h-1zM936 216h1v1h-1zM936 276h1v1h-1zM936 396h1v1h-1zM936 456h1v1h-1zM936 516h1v1h-1zM936 576h1v1h-1zM956 96h1v1h-1zM956 156h1v1h-1zM956 216h1v1h-1zM956 276h1v1h-1zM956 396h1v1h-1zM956 456h1v1h-1zM956 516h1v1h-1zM956 576h1v1h-1zM976 96h1v1h-1zM976 156h1v1h-1zM976 216h1v1h-1zM976 276h1v1h-1zM976 396h1v1h-1zM976 456h1v1h-1zM976 516h1v1h-1zM976 576h1v1h-1zM996 96h1v1h-1zM996 156h1v1h-1zM996 216h1v1h-1zM996 276h1v1h-1zM996 396h1v1h-1zM996 456h1v1h-1zM996 516h1v1h-1zM996 576h1v1h-1z" fill="#8a7f68"/></g><path d="M510.5 36L521.5 36L516 46Z" fill="#ffa500"/><path d="M216.5 326L226.5 316.5H259.5V335.5H226.5Z" fill="none" stroke="#e39500" stroke-width="1.3"/><text x="228" y="330" font-size="10" fill="#e39500" font-family="Liberation Sans">50.0%</text><path d="M1004 322.5H1019" stroke="#f4f400" stroke-width="1.4"/><path d="M995.5 322.5L1004 317.5V327.5Z" fill="#f4f400"/><path d="M18 335H23" stroke="#f4f400" stroke-width="1.5"/><path d="M23 329.5L30.5 335L23 340Z" fill="#f4f400" stroke="#6cc000" stroke-width="0.4"/><circle cx="10.5" cy="334.5" r="8.6" fill="#ffff00" stroke="#ff9c00" stroke-width="1.8"/><path d="M11.2 330.2V338.6M11.2 330.4L8.2 332.8" stroke="#1a1a00" stroke-width="1.6" fill="none"/></svg>
<div style="position:absolute;left:16px;top:641px;width:1000px;height:123px;background:#000"></div><div style="border:1px solid #c8c8c8;border-radius:6px;position:absolute;box-sizing:border-box;left:21px;top:644px;width:281px;height:47px"></div><div style="border:1px solid #c8c8c8;border-radius:6px;position:absolute;box-sizing:border-box;left:21px;top:696px;width:566px;height:46px"></div><div style="border:1px solid #c8c8c8;border-radius:6px;position:absolute;box-sizing:border-box;left:591px;top:644px;width:186px;height:26px"></div><div style="border:1px solid #c8c8c8;border-radius:6px;position:absolute;box-sizing:border-box;left:781px;top:644px;width:231px;height:93px"></div><div style="position:absolute;left:29px;top:651px;width:34px;height:14px;border-radius:7.0px;background:linear-gradient(#d0d0d8,#9898a0 50%,#505058);"></div><div style="position:absolute;left:30.5px;top:652.5px;width:31px;height:11px;border-radius:5.5px;background:linear-gradient(#f4f400,#e0e000 50%,#b0b000);"></div><svg width="34" height="14" style="position:absolute;left:29px;top:651px"><text x="17.3" y="10.4" text-anchor="middle" font-size="9.5" font-weight="bold" letter-spacing="0.6" fill="#101010" font-family="Liberation Sans">C1</text></svg><div style="position:absolute;left:29px;top:672px;width:34px;height:14px;border-radius:7.0px;background:linear-gradient(#d0d0d8,#9898a0 50%,#505058);"></div><div style="position:absolute;left:30.5px;top:673.5px;width:31px;height:11px;border-radius:5.5px;background:linear-gradient(#10f8f8,#00e0e0 50%,#18a8a8);"></div><svg width="34" height="14" style="position:absolute;left:29px;top:672px"><text x="17.3" y="10.4" text-anchor="middle" font-size="9.5" font-weight="bold" letter-spacing="0.6" fill="#101010" font-family="Liberation Sans">C2</text></svg><div style="position:absolute;left:29px;top:723px;width:34px;height:14px;border-radius:7.0px;background:linear-gradient(#d0d0d8,#9898a0 50%,#505058);"></div><div style="position:absolute;left:30.5px;top:724.5px;width:31px;height:11px;border-radius:5.5px;background:linear-gradient(#10f8f8,#00e0e0 50%,#18a8a8);"></div><svg width="34" height="14" style="position:absolute;left:29px;top:723px"><text x="17.3" y="10.4" text-anchor="middle" font-size="9.5" font-weight="bold" letter-spacing="0.6" fill="#101010" font-family="Liberation Sans">C2</text></svg><div style="position:absolute;left:615px;top:651px;width:33px;height:14px;border-radius:7.0px;background:linear-gradient(#d0d0d8,#9898a0 50%,#505058);"></div><div style="position:absolute;left:616.5px;top:652.5px;width:30px;height:11px;border-radius:5.5px;background:linear-gradient(#f4f400,#e0e000 50%,#b0b000);"></div><svg width="33" height="14" style="position:absolute;left:615px;top:651px"><text x="16.8" y="10.4" text-anchor="middle" font-size="9.5" font-weight="bold" letter-spacing="0.6" fill="#101010" font-family="Liberation Sans">C1</text></svg><div style="position:absolute;left:243px;top:650px;width:56px;height:16px;background:#fff"></div><div style="position:absolute;left:243px;top:671px;width:56px;height:16px;background:#fff"></div><div style="position:absolute;left:127px;top:722px;width:71px;height:20px;box-sizing:border-box;border:1px solid #c8c8c8;background:#000"></div><div style="position:absolute;left:197px;top:722px;width:81px;height:20px;box-sizing:border-box;border:1px solid #c8c8c8;background:#2a2a2a"></div><div style="position:absolute;left:277px;top:722px;width:71px;height:20px;box-sizing:border-box;border:1px solid #c8c8c8;background:#000"></div><div style="position:absolute;left:347px;top:722px;width:71px;height:20px;box-sizing:border-box;border:1px solid #c8c8c8;background:#2a2a2a"></div><div style="position:absolute;left:417px;top:722px;width:71px;height:20px;box-sizing:border-box;border:1px solid #c8c8c8;background:#000"></div><div style="position:absolute;left:487px;top:722px;width:61px;height:20px;box-sizing:border-box;border:1px solid #c8c8c8;background:#000"></div><div style="position:absolute;left:547px;top:722px;width:37px;height:20px;box-sizing:border-box;border:1px solid #c8c8c8;background:#000"></div><div style="position:absolute;left:597px;top:651px;width:16px;height:15px;box-sizing:border-box;border:1px solid #ff9000;background:#c8c8cc"></div><svg width="1024" height="768" style="position:absolute;left:0;top:0"><text x="67.01" y="661" font-size="11" font-weight="bold" letter-spacing="0.75" fill="#ffffff" text-anchor="start" font-family="Liberation Sans">500.0m</text><text x="67.01" y="682" font-size="11" font-weight="bold" letter-spacing="0.75" fill="#ffffff" text-anchor="start" font-family="Liberation Sans">500.0m</text><text x="116.4" y="661" font-size="11" font-weight="bold" letter-spacing="0.75" fill="#a8a8a8" text-anchor="start" font-family="Liberation Sans">Offset:1.0V</text><text x="116.4" y="682" font-size="11" font-weight="bold" letter-spacing="0.75" fill="#a8a8a8" text-anchor="start" font-family="Liberation Sans">Offset:930.0mV</text><text x="212.06" y="661" font-size="11" font-weight="bold" letter-spacing="0.75" fill="#ffffff" text-anchor="start" font-family="Liberation Sans">50Ω</text><text x="212.06" y="682" font-size="11" font-weight="bold" letter-spacing="0.75" fill="#ffffff" text-anchor="start" font-family="Liberation Sans">50Ω</text><text x="145.59" y="715" font-size="11" font-weight="bold" letter-spacing="0.75" fill="#ffffff" text-anchor="start" font-family="Liberation Sans">Value</text><text x="220.65" y="715" font-size="11" font-weight="bold" letter-spacing="0.75" fill="#ffffff" text-anchor="start" font-family="Liberation Sans">Mean</text><text x="300.88" y="715" font-size="11" font-weight="bold" letter-spacing="0.75" fill="#ffffff" text-anchor="start" font-family="Liberation Sans">Min</text><text x="370.21000000000004" y="715" font-size="11" font-weight="bold" letter-spacing="0.75" fill="#ffffff" text-anchor="start" font-family="Liberation Sans">Max</text><text x="432.63" y="715" font-size="11" font-weight="bold" letter-spacing="0.75" fill="#ffffff" text-anchor="start" font-family="Liberation Sans">St Dev</text><text x="499.02" y="715" font-size="11" font-weight="bold" letter-spacing="0.75" fill="#ffffff" text-anchor="start" font-family="Liberation Sans">Count</text><text x="553.2099999999999" y="715" font-size="11" font-weight="bold" letter-spacing="0.75" fill="#ffffff" text-anchor="start" font-family="Liberation Sans">Info</text><text x="68.88000000000001" y="735" font-size="11" font-weight="bold" letter-spacing="0.75" fill="#ffffff" text-anchor="start" font-family="Liberation Sans">Freq*</text><text x="128.85999999999999" y="735" font-size="11" font-weight="bold" letter-spacing="0.75" fill="#ffffff" text-anchor="start" font-family="Liberation Sans">2.5MHz</text><text x="198.41" y="735" font-size="11" font-weight="bold" letter-spacing="0.75" fill="#ffffff" text-anchor="start" font-family="Liberation Sans">2.4999755M</text><text x="279.01" y="735" font-size="11" font-weight="bold" letter-spacing="0.75" fill="#ffffff" text-anchor="start" font-family="Liberation Sans">2.5M</text><text x="348.41" y="735.01" font-size="11" font-weight="bold" letter-spacing="0.75" fill="#ffffff" text-anchor="start" font-family="Liberation Sans">2.5M</text><text x="418.85" y="735" font-size="11" font-weight="bold" letter-spacing="0.75" fill="#ffffff" text-anchor="start" font-family="Liberation Sans">0.0</text><text x="489.08" y="735" font-size="11" font-weight="bold" letter-spacing="0.75" fill="#ffffff" text-anchor="start" font-family="Liberation Sans">1.0</text><text x="599" y="662" font-size="12" font-weight="bold" letter-spacing="0" fill="#181818" text-anchor="start" font-family="Liberation Sans">A'</text><text x="666.95" y="661" font-size="11" font-weight="bold" letter-spacing="1.1" fill="#ffffff" text-anchor="start" font-family="Liberation Sans">1.1V</text><text x="788.41" y="661" font-size="11" font-weight="bold" letter-spacing="0.75" fill="#ffffff" text-anchor="start" font-family="Liberation Sans">200.0ns/div</text><text x="879.22" y="661" font-size="11" font-weight="bold" letter-spacing="0.75" fill="#ffffff" text-anchor="start" font-family="Liberation Sans">12.5GS/s</text><text x="963.84" y="661" font-size="11" font-weight="bold" letter-spacing="0.75" fill="#ffffff" text-anchor="start" font-family="Liberation Sans">80.0ps</text><text x="789.0" y="682" font-size="11" font-weight="bold" letter-spacing="0.75" fill="#ff1010" text-anchor="start" font-family="Liberation Sans">Stopped</text><text x="877.81" y="682" font-size="11" font-weight="bold" letter-spacing="0.75" fill="#ffffff" text-anchor="start" font-family="Liberation Sans">Single Seq</text><text x="788.22" y="703" font-size="11" font-weight="bold" letter-spacing="0.75" fill="#ffffff" text-anchor="start" font-family="Liberation Sans">1 acqs</text><text x="928.88" y="703" font-size="11" font-weight="bold" letter-spacing="0.75" fill="#ffffff" text-anchor="start" font-family="Liberation Sans">RL:25.0k</text><text x="788.4" y="724" font-size="11" font-weight="bold" letter-spacing="0.75" fill="#ffffff" text-anchor="start" font-family="Liberation Sans">Auto</text><text x="831.08" y="724" font-size="11" font-weight="bold" letter-spacing="0.75" fill="#ffffff" text-anchor="start" font-family="Liberation Sans">December 19, 2022</text><text x="955.5600000000001" y="724" font-size="11" font-weight="bold" letter-spacing="0.75" fill="#ff9a00" text-anchor="start" font-family="Liberation Sans">15:26:30</text><text x="245.5" y="657.5" font-size="9" font-weight="normal" letter-spacing="0" fill="#000" text-anchor="start" font-family="Liberation Sans">B</text><text x="250" y="664" font-size="11" font-weight="bold" letter-spacing="0" fill="#000" text-anchor="start" font-family="Liberation Sans">W</text><text x="260.5" y="661" font-size="11" font-weight="bold" letter-spacing="0.1" fill="#000" text-anchor="start" font-family="Liberation Sans">:8.0G</text><text x="245.5" y="678.5" font-size="9" font-weight="normal" letter-spacing="0" fill="#000" text-anchor="start" font-family="Liberation Sans">B</text><text x="250" y="685" font-size="11" font-weight="bold" letter-spacing="0" fill="#000" text-anchor="start" font-family="Liberation Sans">W</text><text x="260.5" y="682" font-size="11" font-weight="bold" letter-spacing="0.1" fill="#000" text-anchor="start" font-family="Liberation Sans">:8.0G</text><path d="M650 663.5H655L661 652H665" stroke="#ffffff" stroke-width="1.4" fill="none"/><path d="M994.6 674V686" stroke="#f4f400" stroke-width="3.2" stroke-linecap="round"/><circle cx="994.6" cy="685.6" r="3.5" fill="#f4f400"/></svg>
</body></html>
